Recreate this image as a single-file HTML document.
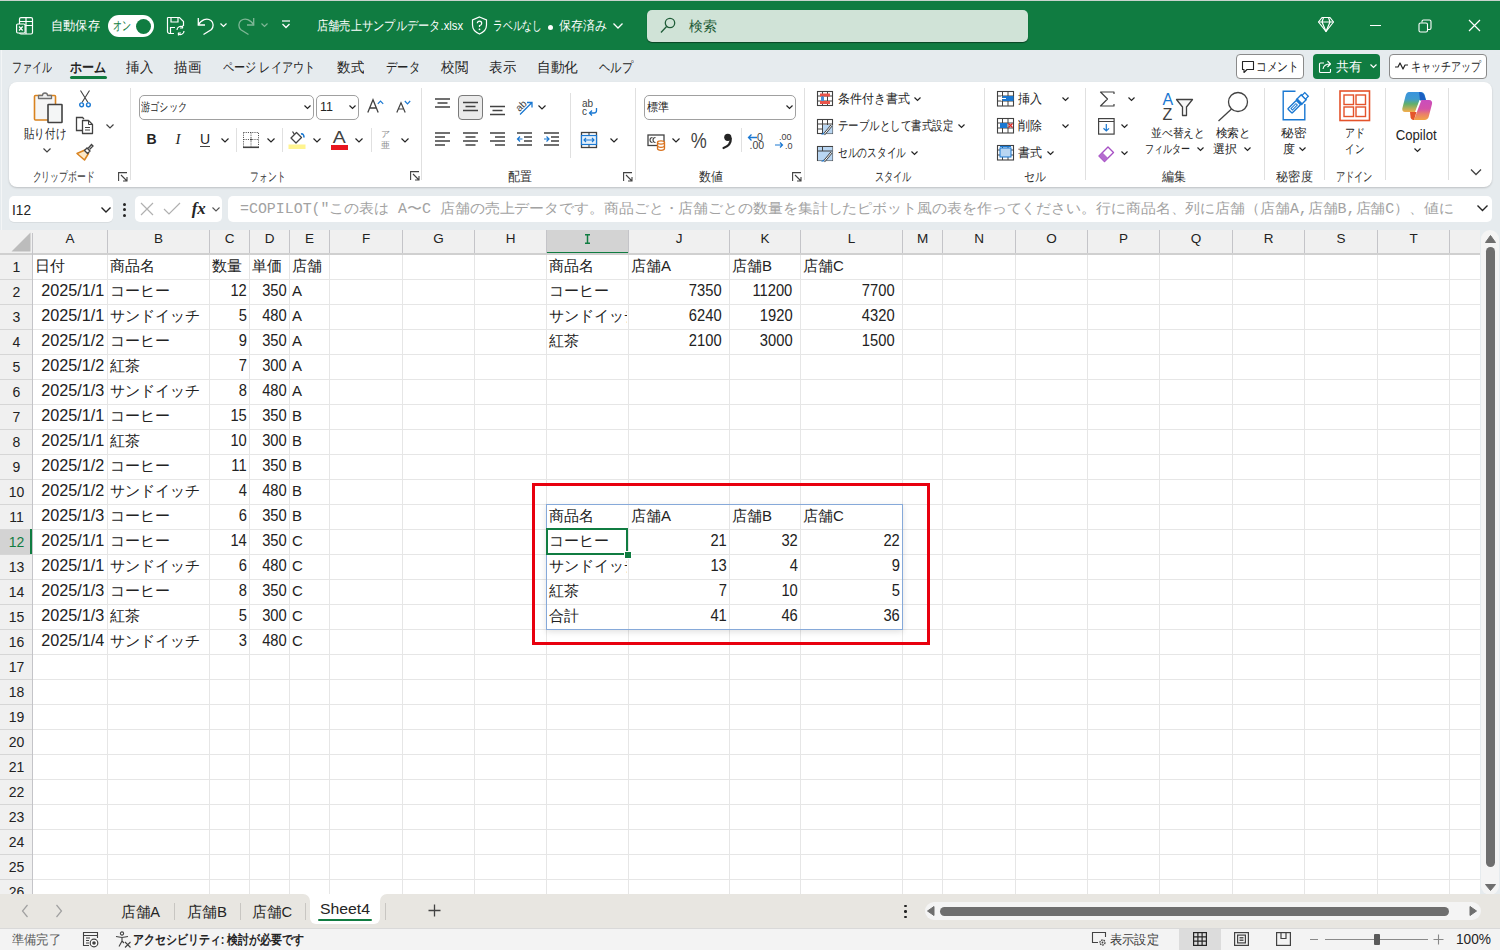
<!DOCTYPE html><html><head><meta charset="utf-8"><style>
html,body{margin:0;padding:0}
body{width:1500px;height:950px;position:relative;overflow:hidden;font-family:"Liberation Sans",sans-serif;background:#e6ebee}
</style></head><body>
<div style="position:absolute;left:0px;top:0px;width:1500px;height:50px;background:#107c41"></div>
<div style="position:absolute;left:0px;top:0px;width:1500px;height:1px;background:#c9d3cd"></div>
<svg style="position:absolute;left:16px;top:17px;overflow:visible;" width="18" height="18" viewBox="0 0 18 18"><g fill="none" stroke="#fff" stroke-width="1.2"><rect x="3.5" y="0.6" width="13" height="16.4" rx="1.5"/><path d="M3.5 4.5H16.5M3.5 8.5H16.5M10 0.6V17"/></g><rect x="0.6" y="7" width="8.5" height="9" rx="1.2" fill="#107c41" stroke="#fff" stroke-width="1.2"/><path d="M3 9.5L6.7 13.5M6.7 9.5L3 13.5" stroke="#fff" stroke-width="1.2"/></svg>
<div id="kc80b38d469" style="position:absolute;left:51px;top:17.0px;font-size:13px;line-height:18px;color:#ffffff;white-space:nowrap;transform:scaleX(0.9423);transform-origin:left center;">自動保存</div>
<div style="position:absolute;left:107.5px;top:15px;width:46px;height:21.5px;background:#fff;border-radius:11px"></div>
<div id="k513fdbb71a" style="position:absolute;left:113px;top:17.5px;font-size:12.5px;line-height:17px;color:#107c41;white-space:nowrap;transform:scaleX(0.6923);transform-origin:left center;">オン</div>
<div style="position:absolute;left:136px;top:18.5px;width:15px;height:15px;background:#107c41;border-radius:50%"></div>
<svg style="position:absolute;left:166px;top:16px;overflow:visible;" width="20" height="20" viewBox="0 0 20 20"><g fill="none" stroke="#fff" stroke-width="1.2"><path d="M1.5 1.5H13.5L17.5 5.5V10M8 17.5H3.5A2 2 0 0 1 1.5 15.5V1.5"/><path d="M5 1.5V6H12V1.5M4.5 17.5V11.5H9"/><path d="M11 14a3.5 3.5 0 0 1 6-2.5M18 15a3.5 3.5 0 0 1-6 2.5"/><path d="M16.5 9.5V12H14M12.5 19.5V17H15"/></g></svg>
<svg style="position:absolute;left:196px;top:16px;overflow:visible;" width="20" height="20" viewBox="0 0 20 20"><g fill="none" stroke="#fff" stroke-width="1.3"><path d="M2.3 9C5 3.5 11 1.5 15 4.5C18 7 17.5 11 15.5 13.5L7.5 18.5"/><path d="M2.3 2V9H9"/></g></svg>
<svg style="position:absolute;left:219.5px;top:22.75px;overflow:visible;" width="7" height="4.5" viewBox="0 0 7 4.5"><path d="M0.5 0.5L3.5 3.5L6.5 0.5" fill="none" stroke="#fff" stroke-width="1.2"/></svg>
<svg style="position:absolute;left:236px;top:16px;overflow:visible;" width="20" height="20" viewBox="0 0 20 20"><g fill="none" stroke="#7fb796" stroke-width="1.3"><path d="M17.7 9C15 3.5 9 1.5 5 4.5C2 7 2.5 11 4.5 13.5L12.5 18.5"/><path d="M17.7 2V9H11"/></g></svg>
<svg style="position:absolute;left:260.5px;top:22.75px;overflow:visible;" width="7" height="4.5" viewBox="0 0 7 4.5"><path d="M0.5 0.5L3.5 3.5L6.5 0.5" fill="none" stroke="#7fb796" stroke-width="1.2"/></svg>
<svg style="position:absolute;left:281px;top:20px;overflow:visible;" width="10" height="9" viewBox="0 0 10 9"><path d="M1 1H9" stroke="#fff" stroke-width="1.2"/><path d="M1.5 4L5 7.5L8.5 4" fill="none" stroke="#fff" stroke-width="1.3"/></svg>
<div id="kfa239ee029" style="position:absolute;left:317px;top:17.0px;font-size:13px;line-height:18px;color:#ffffff;white-space:nowrap;transform:scaleX(0.8639);transform-origin:left center;">店舗売上サンプルデータ.xlsx</div>
<svg style="position:absolute;left:471px;top:16px;overflow:visible;" width="17" height="19" viewBox="0 0 17 19"><g fill="none" stroke="#fff" stroke-width="1.2"><path d="M8.5 1L15.5 4V9C15.5 13.5 12 16.5 8.5 18C5 16.5 1.5 13.5 1.5 9V4Z"/><path d="M6.3 7.3A2.2 2.2 0 1 1 8.5 9.5V11"/></g><circle cx="8.5" cy="13.3" r="0.9" fill="#fff"/></svg>
<div id="k0396da8b92" style="position:absolute;left:493px;top:17.0px;font-size:13px;line-height:18px;color:#ffffff;white-space:nowrap;transform:scaleX(0.7538);transform-origin:left center;">ラベルなし</div>
<div style="position:absolute;left:548px;top:25px;width:5px;height:5px;background:#fff;border-radius:50%"></div>
<div id="k98cbf28133" style="position:absolute;left:559px;top:17.0px;font-size:13px;line-height:18px;color:#ffffff;white-space:nowrap;transform:scaleX(0.9231);transform-origin:left center;">保存済み</div>
<svg style="position:absolute;left:612.5px;top:23.0px;overflow:visible;" width="10" height="6.0" viewBox="0 0 10 6.0"><path d="M0.5 0.5L5.0 5.0L9.5 0.5" fill="none" stroke="#fff" stroke-width="1.3"/></svg>
<div style="position:absolute;left:647px;top:9.5px;width:381px;height:32px;background:#d0e3d7;border-radius:5px;box-shadow:0 1px 1px rgba(0,0,0,0.45)"></div>
<svg style="position:absolute;left:660px;top:17px;overflow:visible;" width="16" height="17" viewBox="0 0 16 17"><g fill="none" stroke="#1f5c38" stroke-width="1.3"><circle cx="10" cy="6" r="4.7"/><path d="M6.6 9.5L1 15.5"/></g></svg>
<div id="kc82e15abd0" style="position:absolute;left:689px;top:16.5px;font-size:14px;line-height:19px;color:#1f5c38;white-space:nowrap;transform:scaleX(1.0000);transform-origin:left center;">検索</div>
<svg style="position:absolute;left:1317px;top:16px;overflow:visible;" width="18" height="17" viewBox="0 0 18 17"><g fill="none" stroke="#fff" stroke-width="1.2" stroke-linejoin="round"><path d="M5 1.5H13L16.5 6L9 15.5L1.5 6Z"/><path d="M1.5 6H16.5M6.5 1.5L5 6L9 15.5L13 6L11.5 1.5"/></g></svg>
<div style="position:absolute;left:1370px;top:25px;width:11px;height:1.3px;background:#fff"></div>
<svg style="position:absolute;left:1418px;top:19px;overflow:visible;" width="14" height="14" viewBox="0 0 14 14"><g fill="none" stroke="#fff" stroke-width="1.1"><rect x="1" y="4" width="8.5" height="9" rx="1.5"/><path d="M4 3.5V2.5A1.5 1.5 0 0 1 5.5 1H11.5A1.5 1.5 0 0 1 13 2.5V9A1.5 1.5 0 0 1 11.5 10.5H10"/></g></svg>
<svg style="position:absolute;left:1468px;top:19px;overflow:visible;" width="13" height="13" viewBox="0 0 13 13"><path d="M1 1L12 12M12 1L1 12" stroke="#fff" stroke-width="1.2"/></svg>
<div style="position:absolute;left:0px;top:50px;width:1500px;height:843px;background:#e6ebee"></div>
<div style="position:absolute;left:1px;top:50px;width:1px;height:180px;background:#f3f5f6"></div>
<div id="kdeceec6de7" style="position:absolute;left:12px;top:57.5px;font-size:14px;line-height:19px;color:#242424;white-space:nowrap;transform:scaleX(0.7143);transform-origin:left center;">ファイル</div>
<div id="k7e3082d08b" style="position:absolute;left:70px;top:57.5px;font-size:14px;line-height:19px;color:#242424;white-space:nowrap;transform:scaleX(0.8571);transform-origin:left center;font-weight:bold">ホーム</div>
<div id="k71ca8e1be8" style="position:absolute;left:126px;top:57.5px;font-size:14px;line-height:19px;color:#242424;white-space:nowrap;transform:scaleX(0.9643);transform-origin:left center;">挿入</div>
<div id="k2697a59992" style="position:absolute;left:174px;top:57.5px;font-size:14px;line-height:19px;color:#242424;white-space:nowrap;transform:scaleX(0.9643);transform-origin:left center;">描画</div>
<div id="k6b0234109a" style="position:absolute;left:223px;top:57.5px;font-size:14px;line-height:19px;color:#242424;white-space:nowrap;transform:scaleX(0.7939);transform-origin:left center;">ページ レイアウト</div>
<div id="ka654211fda" style="position:absolute;left:337px;top:57.5px;font-size:14px;line-height:19px;color:#242424;white-space:nowrap;transform:scaleX(0.9643);transform-origin:left center;">数式</div>
<div id="k51a8e1831c" style="position:absolute;left:386px;top:57.5px;font-size:14px;line-height:19px;color:#242424;white-space:nowrap;transform:scaleX(0.8095);transform-origin:left center;">データ</div>
<div id="kfc10c9004e" style="position:absolute;left:441px;top:57.5px;font-size:14px;line-height:19px;color:#242424;white-space:nowrap;transform:scaleX(0.9643);transform-origin:left center;">校閲</div>
<div id="kf959d6e3b8" style="position:absolute;left:489px;top:57.5px;font-size:14px;line-height:19px;color:#242424;white-space:nowrap;transform:scaleX(0.9643);transform-origin:left center;">表示</div>
<div id="ka636eb5376" style="position:absolute;left:537px;top:57.5px;font-size:14px;line-height:19px;color:#242424;white-space:nowrap;transform:scaleX(0.9762);transform-origin:left center;">自動化</div>
<div id="kbe3d7886c9" style="position:absolute;left:599px;top:57.5px;font-size:14px;line-height:19px;color:#242424;white-space:nowrap;transform:scaleX(0.8095);transform-origin:left center;">ヘルプ</div>
<div style="position:absolute;left:70px;top:76px;width:37px;height:3px;background:#107c41;border-radius:2px"></div>
<div style="position:absolute;left:1236px;top:54px;width:68px;height:25px;background:#fff;border:1px solid #8a8a8a;border-radius:4px;box-sizing:border-box"></div>
<svg style="position:absolute;left:1241px;top:60px;overflow:visible;" width="14" height="14" viewBox="0 0 14 14"><path d="M1.5 1.5H12.5V9.5H6L3 12.5V9.5H1.5Z" fill="none" stroke="#242424" stroke-width="1.1" stroke-linejoin="round"/></svg>
<div id="k367a9ea3e5" style="position:absolute;left:1256px;top:57.5px;font-size:13px;line-height:18px;color:#242424;white-space:nowrap;transform:scaleX(0.8269);transform-origin:left center;">コメント</div>
<div style="position:absolute;left:1313px;top:54px;width:67px;height:25px;background:#107c41;border-radius:4px"></div>
<svg style="position:absolute;left:1318px;top:59px;overflow:visible;" width="15" height="15" viewBox="0 0 15 15"><g fill="none" stroke="#fff" stroke-width="1.1"><path d="M6 4H2.5A1 1 0 0 0 1.5 5V12.5A1 1 0 0 0 2.5 13.5H11.5A1 1 0 0 0 12.5 12.5V10"/><path d="M5 10C5.5 7 8 5 12 5M9.5 2L12.5 5L9.5 8" stroke-linejoin="round"/></g></svg>
<div id="k86da04f211" style="position:absolute;left:1336px;top:57.5px;font-size:13px;line-height:18px;color:#fff;white-space:nowrap;transform:scaleX(1.0000);transform-origin:left center;">共有</div>
<svg style="position:absolute;left:1369.5px;top:64.25px;overflow:visible;" width="7" height="4.5" viewBox="0 0 7 4.5"><path d="M0.5 0.5L3.5 3.5L6.5 0.5" fill="none" stroke="#fff" stroke-width="1.2"/></svg>
<div style="position:absolute;left:1389px;top:54px;width:98px;height:25px;background:#fff;border:1px solid #8a8a8a;border-radius:4px;box-sizing:border-box"></div>
<svg style="position:absolute;left:1394px;top:61px;overflow:visible;" width="15" height="10" viewBox="0 0 15 10"><path d="M1 6H4L6 2L9 8L11 4H14" fill="none" stroke="#242424" stroke-width="1.2" stroke-linejoin="round"/></svg>
<div id="kaecc8b98e7" style="position:absolute;left:1411px;top:57.5px;font-size:13px;line-height:18px;color:#242424;white-space:nowrap;transform:scaleX(0.7692);transform-origin:left center;">キャッチアップ</div>
<div style="position:absolute;left:9px;top:82px;width:1483px;height:105px;background:#fff;border-radius:8px;box-shadow:0 1px 2px rgba(0,0,0,0.18)"></div>
<svg style="position:absolute;left:33px;top:90px;overflow:visible;" width="31" height="34" viewBox="0 0 31 34"><rect x="1.5" y="5.5" width="21" height="24.5" rx="1" fill="#f6f6f6" stroke="#d9831f" stroke-width="1.6"/><path d="M5.5 8.5V5.5H9.5A2.5 2.5 0 0 1 14.5 5.5H18.5V8.5Z" fill="#f0f0f0" stroke="#707070" stroke-width="1.3" stroke-linejoin="round"/><rect x="15" y="14.5" width="14" height="18" rx="0.5" fill="#f4f6f6" stroke="#424242" stroke-width="1.6"/></svg>
<div style="position:absolute;left:-255px;width:600px;text-align:center;top:125.0px;font-size:13px;line-height:18px;color:#242424;white-space:nowrap;"><span id="k82a7d492c0" style="display:inline-block;transform:scaleX(0.8077);transform-origin:center center;">貼り付け</span></div>
<svg style="position:absolute;left:43.0px;top:147.5px;overflow:visible;" width="8" height="5.0" viewBox="0 0 8 5.0"><path d="M0.5 0.5L4.0 4.0L7.5 0.5" fill="none" stroke="#424242" stroke-width="1.2"/></svg>
<svg style="position:absolute;left:78px;top:90px;overflow:visible;" width="14" height="18" viewBox="0 0 14 18"><path d="M2.5 0.5L10 12.5M11.5 0.5L4 12.5" stroke="#424242" stroke-width="1.1" fill="none"/><circle cx="3.6" cy="14.8" r="1.9" fill="none" stroke="#1a78d2" stroke-width="1.4"/><circle cx="10.4" cy="14.8" r="1.9" fill="none" stroke="#1a78d2" stroke-width="1.4"/></svg>
<svg style="position:absolute;left:75px;top:116px;overflow:visible;" width="19" height="19" viewBox="0 0 19 19"><path d="M8.5 14.5H1.5V1.5H7.5L9 3" fill="none" stroke="#424242" stroke-width="1.3"/><path d="M7.5 4.5H13.5L17.5 8.5V17.5H7.5Z" fill="#fff" stroke="#424242" stroke-width="1.3" stroke-linejoin="round"/><path d="M13.5 4.5V8.5H17.5M10 11.5H15M10 14H15" fill="none" stroke="#424242" stroke-width="1"/></svg>
<svg style="position:absolute;left:105.5px;top:123.5px;overflow:visible;" width="8" height="5.0" viewBox="0 0 8 5.0"><path d="M0.5 0.5L4.0 4.0L7.5 0.5" fill="none" stroke="#424242" stroke-width="1.2"/></svg>
<svg style="position:absolute;left:76px;top:143px;overflow:visible;" width="18" height="18" viewBox="0 0 18 18"><path d="M1 10.5L9 7L12.5 10.5L8.5 17Z" fill="#fde9c8" stroke="#d9831f" stroke-width="1.5" stroke-linejoin="round"/><path d="M8.5 7.5L11 5L14 8L11.5 10.5Z" fill="#fff" stroke="#424242" stroke-width="1.3"/><path d="M12 5.5L15.5 1.5L17 3L13.5 6.5" fill="#fff" stroke="#424242" stroke-width="1.3"/></svg>
<div style="position:absolute;left:-237px;width:600px;text-align:center;top:167.5px;font-size:13px;line-height:18px;color:#333333;white-space:nowrap;"><span id="k5d3b5927a9" style="display:inline-block;transform:scaleX(0.6813);transform-origin:center center;">クリップボード</span></div>
<svg style="position:absolute;left:118px;top:172px;overflow:visible;" width="10" height="10" viewBox="0 0 10 10"><g fill="none" stroke="#424242" stroke-width="1.1"><path d="M0.6 9V0.6H9"/><path d="M3 3L9 9M9 5V9H5"/></g></svg>
<div style="position:absolute;left:130px;top:88px;width:1px;height:92px;background:#e0e0e0"></div>
<div style="position:absolute;left:139px;top:94.5px;width:175px;height:25px;border:1.3px solid #a0a0a0;border-radius:5px;box-sizing:border-box"></div>
<div id="k4c1d2b1613" style="position:absolute;left:141px;top:98.5px;font-size:12px;line-height:16px;color:#242424;white-space:nowrap;transform:scaleX(0.7667);transform-origin:left center;">游ゴシック</div>
<svg style="position:absolute;left:304.0px;top:105.25px;overflow:visible;" width="7" height="4.5" viewBox="0 0 7 4.5"><path d="M0.5 0.5L3.5 3.5L6.5 0.5" fill="none" stroke="#242424" stroke-width="1.2"/></svg>
<div style="position:absolute;left:316px;top:94.5px;width:43px;height:25px;border:1.3px solid #a0a0a0;border-radius:5px;box-sizing:border-box"></div>
<div id="k6cc648e513" style="position:absolute;left:320px;top:97.5px;font-size:13px;line-height:18px;color:#242424;white-space:nowrap;transform:scaleX(0.9630);transform-origin:left center;">11</div>
<svg style="position:absolute;left:349.0px;top:105.25px;overflow:visible;" width="7" height="4.5" viewBox="0 0 7 4.5"><path d="M0.5 0.5L3.5 3.5L6.5 0.5" fill="none" stroke="#242424" stroke-width="1.2"/></svg>
<svg style="position:absolute;left:367px;top:98.5px;overflow:visible;" width="12" height="14" viewBox="0 0 12 14"><path d="M0.8 13.5L6 0.8L11.2 13.5M2.8 9H9.2" fill="none" stroke="#424242" stroke-width="1.3"/></svg>
<svg style="position:absolute;left:377px;top:99.5px;overflow:visible;" width="7" height="5" viewBox="0 0 7 5"><path d="M0.8 3.8L3.5 1L6.2 3.8" fill="none" stroke="#1a78d2" stroke-width="1.2"/></svg>
<svg style="position:absolute;left:396px;top:102px;overflow:visible;" width="10" height="11" viewBox="0 0 10 11"><path d="M0.8 10.5L5 0.8L9.2 10.5M2.4 7H7.6" fill="none" stroke="#424242" stroke-width="1.2"/></svg>
<svg style="position:absolute;left:403.5px;top:99.5px;overflow:visible;" width="7" height="5" viewBox="0 0 7 5"><path d="M0.8 1L3.5 3.8L6.2 1" fill="none" stroke="#1a78d2" stroke-width="1.2"/></svg>
<div style="position:absolute;left:-148.5px;width:600px;text-align:center;top:130.0px;font-size:14px;line-height:19px;color:#242424;white-space:nowrap;font-weight:bold"><span>B</span></div>
<div style="position:absolute;left:-122px;width:600px;text-align:center;top:129.0px;font-size:15px;line-height:21px;color:#242424;white-space:nowrap;font-family:'Liberation Serif',serif;font-style:italic"><span>I</span></div>
<div style="position:absolute;left:-95px;width:600px;text-align:center;top:129.5px;font-size:14px;line-height:19px;color:#242424;white-space:nowrap;"><span>U</span></div>
<div style="position:absolute;left:200px;top:145.5px;width:10px;height:1.3px;background:#424242"></div>
<svg style="position:absolute;left:221.0px;top:137.5px;overflow:visible;" width="8" height="5.0" viewBox="0 0 8 5.0"><path d="M0.5 0.5L4.0 4.0L7.5 0.5" fill="none" stroke="#242424" stroke-width="1.2"/></svg>
<div style="position:absolute;left:236px;top:128px;width:1px;height:24px;background:#e0e0e0"></div>
<svg style="position:absolute;left:242px;top:131px;overflow:visible;" width="18" height="18" viewBox="0 0 18 18"><g fill="none" stroke="#424242" stroke-width="1" stroke-dasharray="1 1.2"><path d="M1.5 1.5H16.5V15.5M1.5 1.5V15.5M1.5 8.5H16.5M9 1.5V15.5"/></g><path d="M1 16.3H17" stroke="#424242" stroke-width="1.6"/><circle cx="9" cy="8.5" r="1" fill="#424242"/></svg>
<svg style="position:absolute;left:267.0px;top:137.5px;overflow:visible;" width="8" height="5.0" viewBox="0 0 8 5.0"><path d="M0.5 0.5L4.0 4.0L7.5 0.5" fill="none" stroke="#242424" stroke-width="1.2"/></svg>
<div style="position:absolute;left:282px;top:128px;width:1px;height:24px;background:#e0e0e0"></div>
<svg style="position:absolute;left:288px;top:130px;overflow:visible;" width="19" height="20" viewBox="0 0 19 20"><path d="M3 8L8.5 2.5L13.5 7.5L8 13Z" fill="#fff" stroke="#424242" stroke-width="1.3" stroke-linejoin="round"/><path d="M6.5 4.5L4.5 1.5" stroke="#424242" stroke-width="1.3"/><path d="M13 4C15 3.5 16 5 16 7.5" fill="none" stroke="#1a78d2" stroke-width="1.6"/><rect x="0.5" y="14.5" width="17" height="4.5" fill="#fff48f"/></svg>
<svg style="position:absolute;left:313.0px;top:137.5px;overflow:visible;" width="8" height="5.0" viewBox="0 0 8 5.0"><path d="M0.5 0.5L4.0 4.0L7.5 0.5" fill="none" stroke="#242424" stroke-width="1.2"/></svg>
<div style="position:absolute;left:39.5px;width:600px;text-align:center;top:126.5px;font-size:16px;line-height:22px;color:#424242;white-space:nowrap;"><span id="k9cfecd8ff2" style="display:inline-block;transform:scaleX(1.2182);transform-origin:center center;">A</span></div>
<div style="position:absolute;left:331px;top:145px;width:17px;height:4.5px;background:#e8161f"></div>
<svg style="position:absolute;left:355.0px;top:137.5px;overflow:visible;" width="8" height="5.0" viewBox="0 0 8 5.0"><path d="M0.5 0.5L4.0 4.0L7.5 0.5" fill="none" stroke="#242424" stroke-width="1.2"/></svg>
<div style="position:absolute;left:370.5px;top:128px;width:1px;height:24px;background:#e0e0e0"></div>
<div style="position:absolute;left:85px;width:600px;text-align:center;top:129.0px;font-size:8.5px;line-height:11px;color:#8a8a8a;white-space:nowrap;"><span>ア</span></div>
<div style="position:absolute;left:85px;width:600px;text-align:center;top:138.5px;font-size:9px;line-height:12px;color:#8a8a8a;white-space:nowrap;"><span>亜</span></div>
<svg style="position:absolute;left:401.0px;top:137.5px;overflow:visible;" width="8" height="5.0" viewBox="0 0 8 5.0"><path d="M0.5 0.5L4.0 4.0L7.5 0.5" fill="none" stroke="#242424" stroke-width="1.2"/></svg>
<div style="position:absolute;left:-32px;width:600px;text-align:center;top:167.5px;font-size:13px;line-height:18px;color:#333333;white-space:nowrap;"><span id="kd9a583a714" style="display:inline-block;transform:scaleX(0.6731);transform-origin:center center;">フォント</span></div>
<svg style="position:absolute;left:410px;top:171px;overflow:visible;" width="10" height="10" viewBox="0 0 10 10"><g fill="none" stroke="#424242" stroke-width="1.1"><path d="M0.6 9V0.6H9"/><path d="M3 3L9 9M9 5V9H5"/></g></svg>
<div style="position:absolute;left:421px;top:88px;width:1px;height:92px;background:#e0e0e0"></div>
<svg style="position:absolute;left:434px;top:96px;overflow:visible;" width="18" height="18" viewBox="0 0 18 18"><path d="M1 3H16M3.5 7H13.5M1 11H16" fill="none" stroke="#424242" stroke-width="1.3"/></svg>
<div style="position:absolute;left:458px;top:94.5px;width:24.5px;height:25px;background:#ebebeb;border:1px solid #7a7a7a;border-radius:4px;box-sizing:border-box"></div>
<svg style="position:absolute;left:461.5px;top:98px;overflow:visible;" width="18" height="18" viewBox="0 0 18 18"><path d="M1 4.5H16M3.5 8.5H13.5M1 12.5H16" fill="none" stroke="#424242" stroke-width="1.3"/></svg>
<svg style="position:absolute;left:489px;top:98px;overflow:visible;" width="18" height="18" viewBox="0 0 18 18"><path d="M1 8.5H16M3.5 12.5H13.5M1 16.5H16" fill="none" stroke="#424242" stroke-width="1.3"/></svg>
<svg style="position:absolute;left:515px;top:97px;overflow:visible;" width="20" height="19" viewBox="0 0 20 19"><text x="0" y="12" font-size="10" fill="#424242" transform="rotate(-45 6 8)" font-family="Liberation Sans">ab</text><path d="M5 17.5L17 5.5M12 5.5H17V10.5" fill="none" stroke="#1a78d2" stroke-width="1.3"/></svg>
<svg style="position:absolute;left:538.0px;top:104.5px;overflow:visible;" width="8" height="5.0" viewBox="0 0 8 5.0"><path d="M0.5 0.5L4.0 4.0L7.5 0.5" fill="none" stroke="#242424" stroke-width="1.2"/></svg>
<div style="position:absolute;left:570px;top:93px;width:1px;height:65px;background:#e0e0e0"></div>
<svg style="position:absolute;left:582px;top:98px;overflow:visible;" width="18" height="19" viewBox="0 0 18 19"><text x="0" y="8.5" font-size="10" fill="#424242" font-family="Liberation Sans">ab</text><text x="0" y="17" font-size="10" fill="#424242" font-family="Liberation Sans">c</text><path d="M14.5 10V12.5A2.5 2.5 0 0 1 12 15H7.5M10 12.5L7.5 15L10 17.5" fill="none" stroke="#1a78d2" stroke-width="1.3"/></svg>
<svg style="position:absolute;left:434px;top:131px;overflow:visible;" width="18" height="18" viewBox="0 0 18 18"><path d="M1 2H16M1 6H11M1 10H16M1 14H11" fill="none" stroke="#424242" stroke-width="1.3"/></svg>
<svg style="position:absolute;left:461.5px;top:131px;overflow:visible;" width="18" height="18" viewBox="0 0 18 18"><path d="M1 2H16M3.5 6H13.5M1 10H16M3.5 14H13.5" fill="none" stroke="#424242" stroke-width="1.3"/></svg>
<svg style="position:absolute;left:488.5px;top:131px;overflow:visible;" width="18" height="18" viewBox="0 0 18 18"><path d="M1 2H16M6 6H16M1 10H16M6 14H16" fill="none" stroke="#424242" stroke-width="1.3"/></svg>
<svg style="position:absolute;left:516px;top:131px;overflow:visible;" width="18" height="18" viewBox="0 0 18 18"><path d="M1 2H16M8 6H16M8 10H16M1 14H16" fill="none" stroke="#424242" stroke-width="1.3"/><path d="M6.5 8H1.5M4 5.5L1.5 8L4 10.5" fill="none" stroke="#1a78d2" stroke-width="1.2"/></svg>
<svg style="position:absolute;left:543px;top:131px;overflow:visible;" width="18" height="18" viewBox="0 0 18 18"><path d="M1 2H16M8 6H16M8 10H16M1 14H16" fill="none" stroke="#424242" stroke-width="1.3"/><path d="M1 8H6M3.5 5.5L6 8L3.5 10.5" fill="none" stroke="#1a78d2" stroke-width="1.2"/></svg>
<svg style="position:absolute;left:580px;top:131px;overflow:visible;" width="18" height="18" viewBox="0 0 18 18"><rect x="1.5" y="1.5" width="15" height="15" fill="none" stroke="#424242" stroke-width="1.3"/><path d="M9 1.5V4M9 14V16.5" stroke="#424242" stroke-width="1.1"/><rect x="1.5" y="4.5" width="15" height="9" fill="#e3effa" stroke="#1a78d2" stroke-width="1.2"/><path d="M4 9H14M6 7L4 9L6 11M12 7L14 9L12 11" fill="none" stroke="#1a78d2" stroke-width="1.1"/></svg>
<svg style="position:absolute;left:610.0px;top:137.5px;overflow:visible;" width="8" height="5.0" viewBox="0 0 8 5.0"><path d="M0.5 0.5L4.0 4.0L7.5 0.5" fill="none" stroke="#242424" stroke-width="1.2"/></svg>
<div style="position:absolute;left:220px;width:600px;text-align:center;top:167.5px;font-size:13px;line-height:18px;color:#333333;white-space:nowrap;"><span id="k296ab472af" style="display:inline-block;transform:scaleX(0.9231);transform-origin:center center;">配置</span></div>
<svg style="position:absolute;left:623px;top:172px;overflow:visible;" width="10" height="10" viewBox="0 0 10 10"><g fill="none" stroke="#424242" stroke-width="1.1"><path d="M0.6 9V0.6H9"/><path d="M3 3L9 9M9 5V9H5"/></g></svg>
<div style="position:absolute;left:634.5px;top:88px;width:1px;height:92px;background:#e0e0e0"></div>
<div style="position:absolute;left:644px;top:94.5px;width:152px;height:25px;border:1.3px solid #a0a0a0;border-radius:5px;box-sizing:border-box"></div>
<div id="k7ceeda4005" style="position:absolute;left:647px;top:98.5px;font-size:12px;line-height:16px;color:#242424;white-space:nowrap;transform:scaleX(0.9167);transform-origin:left center;">標準</div>
<svg style="position:absolute;left:785.5px;top:105.25px;overflow:visible;" width="7" height="4.5" viewBox="0 0 7 4.5"><path d="M0.5 0.5L3.5 3.5L6.5 0.5" fill="none" stroke="#242424" stroke-width="1.2"/></svg>
<svg style="position:absolute;left:647px;top:134px;overflow:visible;" width="20" height="17" viewBox="0 0 20 17"><rect x="1" y="1" width="16" height="10.5" fill="#fff" stroke="#424242" stroke-width="1.3"/><path d="M5.5 3.5A2.3 2.3 0 0 0 5.5 8.5M8.5 3.5A2.3 2.3 0 0 0 8.5 8.5" fill="none" stroke="#424242" stroke-width="1.1"/><path d="M10.5 8.5V14.5C10.5 15.6 12 16.3 14 16.3S17.5 15.6 17.5 14.5V8.5" fill="#fff" stroke="#d9731f" stroke-width="1.3"/><ellipse cx="14" cy="8.5" rx="3.5" ry="1.6" fill="#fff" stroke="#d9731f" stroke-width="1.3"/><path d="M10.5 11.5C10.5 12.6 12 13.3 14 13.3S17.5 12.6 17.5 11.5" fill="none" stroke="#d9731f" stroke-width="1.2"/></svg>
<svg style="position:absolute;left:672.0px;top:137.5px;overflow:visible;" width="8" height="5.0" viewBox="0 0 8 5.0"><path d="M0.5 0.5L4.0 4.0L7.5 0.5" fill="none" stroke="#242424" stroke-width="1.2"/></svg>
<div style="position:absolute;left:399px;width:600px;text-align:center;top:125.5px;font-size:22px;line-height:30px;color:#424242;white-space:nowrap;"><span id="k308ecc40e2" style="display:inline-block;transform:scaleX(0.8179);transform-origin:center center;">%</span></div>
<svg style="position:absolute;left:721px;top:133px;overflow:visible;" width="12" height="16" viewBox="0 0 12 16"><circle cx="6.8" cy="4.3" r="3.6" fill="#242424"/><path d="M9.8 5.5C10 10 7 13.5 2.5 15" fill="none" stroke="#242424" stroke-width="2.2" stroke-linecap="round"/></svg>
<div style="position:absolute;left:741px;top:128px;width:1px;height:24px;background:#e0e0e0"></div>
<svg style="position:absolute;left:747px;top:132px;overflow:visible;" width="19" height="18" viewBox="0 0 19 18"><text x="10" y="9" font-size="10.5" fill="#424242" font-family="Liberation Sans">0</text><text x="2.5" y="17" font-size="10.5" fill="#424242" font-family="Liberation Sans">.00</text><path d="M10 5.5H1.5M4.5 2.5L1.5 5.5L4.5 8.5" fill="none" stroke="#1a78d2" stroke-width="1.3"/></svg>
<svg style="position:absolute;left:774px;top:132px;overflow:visible;" width="19" height="18" viewBox="0 0 19 18"><text x="5" y="8" font-size="9" fill="#424242" font-family="Liberation Sans">.00</text><text x="11" y="16.5" font-size="9" fill="#424242" font-family="Liberation Sans">.0</text><path d="M1 13H8.5M6 10.5L8.5 13L6 15.5" fill="none" stroke="#1a78d2" stroke-width="1.2"/></svg>
<div style="position:absolute;left:411px;width:600px;text-align:center;top:167.5px;font-size:13px;line-height:18px;color:#333333;white-space:nowrap;"><span id="kc6b7fdaf2d" style="display:inline-block;transform:scaleX(0.9231);transform-origin:center center;">数値</span></div>
<svg style="position:absolute;left:792px;top:172px;overflow:visible;" width="10" height="10" viewBox="0 0 10 10"><g fill="none" stroke="#424242" stroke-width="1.1"><path d="M0.6 9V0.6H9"/><path d="M3 3L9 9M9 5V9H5"/></g></svg>
<div style="position:absolute;left:804px;top:88px;width:1px;height:92px;background:#e0e0e0"></div>
<svg style="position:absolute;left:817px;top:91px;overflow:visible;" width="17" height="17" viewBox="0 0 17 17"><rect x="0.5" y="0.5" width="15" height="14" fill="#fff" stroke="#424242" stroke-width="1.1"/><path d="M0.5 5H15.5M0.5 10H15.5M5.5 0.5V14.5M10.5 0.5V14.5" stroke="#424242" stroke-width="1"/><rect x="3" y="2.5" width="10" height="3" fill="#e8544a"/><rect x="3" y="10" width="10" height="3" fill="#e8544a"/><rect x="4" y="5.5" width="3" height="4.5" fill="#4a90d9"/></svg>
<div id="k7cddb756c4" style="position:absolute;left:838px;top:90.0px;font-size:13px;line-height:18px;color:#242424;white-space:nowrap;transform:scaleX(0.9231);transform-origin:left center;">条件付き書式</div>
<svg style="position:absolute;left:913.5px;top:97.25px;overflow:visible;" width="7" height="4.5" viewBox="0 0 7 4.5"><path d="M0.5 0.5L3.5 3.5L6.5 0.5" fill="none" stroke="#242424" stroke-width="1.2"/></svg>
<svg style="position:absolute;left:817px;top:118.5px;overflow:visible;" width="17" height="17" viewBox="0 0 17 17"><rect x="0.5" y="0.5" width="15" height="14" fill="#fff" stroke="#424242" stroke-width="1.1"/><path d="M0.5 5H15.5M0.5 10H15.5M5.5 0.5V14.5M10.5 0.5V14.5" stroke="#424242" stroke-width="1"/><path d="M6 6V14.5H15.5V6Z" fill="#b9d6f2"/><path d="M7 15.5L14.5 6.5" stroke="#424242" stroke-width="2.4"/><path d="M7 15.5L14.5 6.5" stroke="#fff" stroke-width="1"/><path d="M4 16L6.5 13.5L7.5 15Z" fill="#1a78d2"/></svg>
<div id="keabd58c029" style="position:absolute;left:838px;top:117.0px;font-size:13px;line-height:18px;color:#242424;white-space:nowrap;transform:scaleX(0.8042);transform-origin:left center;">テーブルとして書式設定</div>
<svg style="position:absolute;left:957.5px;top:124.25px;overflow:visible;" width="7" height="4.5" viewBox="0 0 7 4.5"><path d="M0.5 0.5L3.5 3.5L6.5 0.5" fill="none" stroke="#242424" stroke-width="1.2"/></svg>
<svg style="position:absolute;left:817px;top:145.5px;overflow:visible;" width="17" height="17" viewBox="0 0 17 17"><rect x="0.5" y="0.5" width="15" height="14" fill="#fff" stroke="#424242" stroke-width="1.1"/><path d="M0.5 5H15.5M0.5 10H15.5M5.5 0.5V14.5M10.5 0.5V14.5" stroke="#424242" stroke-width="1"/><path d="M1 1V14.5H15.5V1Z" fill="#b9d6f2"/><path d="M0.5 5H15.5M5.5 0.5V5" stroke="#424242" stroke-width="1"/><path d="M7 15.5L14.5 6.5" stroke="#424242" stroke-width="2.4"/><path d="M7 15.5L14.5 6.5" stroke="#fff" stroke-width="1"/><path d="M4 16L6.5 13.5L7.5 15Z" fill="#1a78d2"/></svg>
<div id="kf55e3dfd48" style="position:absolute;left:838px;top:144.0px;font-size:13px;line-height:18px;color:#242424;white-space:nowrap;transform:scaleX(0.7473);transform-origin:left center;">セルのスタイル</div>
<svg style="position:absolute;left:910.5px;top:151.25px;overflow:visible;" width="7" height="4.5" viewBox="0 0 7 4.5"><path d="M0.5 0.5L3.5 3.5L6.5 0.5" fill="none" stroke="#242424" stroke-width="1.2"/></svg>
<div style="position:absolute;left:593px;width:600px;text-align:center;top:167.5px;font-size:13px;line-height:18px;color:#333333;white-space:nowrap;"><span id="kc14be8a788" style="display:inline-block;transform:scaleX(0.7115);transform-origin:center center;">スタイル</span></div>
<div style="position:absolute;left:984px;top:88px;width:1px;height:92px;background:#e0e0e0"></div>
<svg style="position:absolute;left:997px;top:90.5px;overflow:visible;" width="18" height="17" viewBox="0 0 18 17"><rect x="0.5" y="0.5" width="16" height="14.5" fill="#fff" stroke="#424242" stroke-width="1.1"/><path d="M0.5 5H16.5M0.5 10H16.5M5.5 0.5V15M11 0.5V15" stroke="#424242" stroke-width="1"/><rect x="5.5" y="5" width="11" height="5" fill="#1a78d2"/><path d="M9 7.5H3M5 5.5L3 7.5L5 9.5" fill="none" stroke="#fff" stroke-width="1.2"/></svg>
<div id="kaba5add79f" style="position:absolute;left:1018px;top:90.0px;font-size:13px;line-height:18px;color:#242424;white-space:nowrap;transform:scaleX(0.9231);transform-origin:left center;">挿入</div>
<svg style="position:absolute;left:1061.5px;top:97.25px;overflow:visible;" width="7" height="4.5" viewBox="0 0 7 4.5"><path d="M0.5 0.5L3.5 3.5L6.5 0.5" fill="none" stroke="#242424" stroke-width="1.2"/></svg>
<svg style="position:absolute;left:997px;top:118px;overflow:visible;" width="18" height="17" viewBox="0 0 18 17"><rect x="0.5" y="0.5" width="16" height="14.5" fill="#fff" stroke="#424242" stroke-width="1.1"/><path d="M0.5 5H16.5M0.5 10H16.5M5.5 0.5V15M11 0.5V15" stroke="#424242" stroke-width="1"/><rect x="3" y="5" width="7" height="5" fill="#1a78d2"/><path d="M11.5 5.5L15.5 9.5M15.5 5.5L11.5 9.5" stroke="#e02a2a" stroke-width="1.3"/><rect x="11" y="4.5" width="6" height="6" fill="none"/></svg>
<div id="k41288d8cb3" style="position:absolute;left:1018px;top:117.0px;font-size:13px;line-height:18px;color:#242424;white-space:nowrap;transform:scaleX(0.9231);transform-origin:left center;">削除</div>
<svg style="position:absolute;left:1061.5px;top:124.25px;overflow:visible;" width="7" height="4.5" viewBox="0 0 7 4.5"><path d="M0.5 0.5L3.5 3.5L6.5 0.5" fill="none" stroke="#242424" stroke-width="1.2"/></svg>
<svg style="position:absolute;left:997px;top:145px;overflow:visible;" width="18" height="17" viewBox="0 0 18 17"><rect x="0.5" y="0.5" width="16" height="14.5" fill="#fff" stroke="#424242" stroke-width="1.1"/><path d="M0.5 5H16.5M0.5 10H16.5M5.5 0.5V15M11 0.5V15" stroke="#424242" stroke-width="1"/><rect x="3" y="3" width="11" height="9" fill="#b9d6f2" stroke="#1a78d2" stroke-width="1"/><path d="M3 1.5H14" stroke="#1a78d2" stroke-width="1.3"/></svg>
<div id="k0330c6951f" style="position:absolute;left:1018px;top:144.0px;font-size:13px;line-height:18px;color:#242424;white-space:nowrap;transform:scaleX(0.9231);transform-origin:left center;">書式</div>
<svg style="position:absolute;left:1046.5px;top:151.25px;overflow:visible;" width="7" height="4.5" viewBox="0 0 7 4.5"><path d="M0.5 0.5L3.5 3.5L6.5 0.5" fill="none" stroke="#242424" stroke-width="1.2"/></svg>
<div style="position:absolute;left:735px;width:600px;text-align:center;top:167.5px;font-size:13px;line-height:18px;color:#333333;white-space:nowrap;"><span id="kdaf281a644" style="display:inline-block;transform:scaleX(0.8462);transform-origin:center center;">セル</span></div>
<div style="position:absolute;left:1085px;top:88px;width:1px;height:92px;background:#e0e0e0"></div>
<svg style="position:absolute;left:1099px;top:91px;overflow:visible;" width="17" height="16" viewBox="0 0 17 16"><path d="M15 3V1H1.5L8.5 8L1.5 15H15V13" fill="none" stroke="#424242" stroke-width="1.2" stroke-linejoin="round"/></svg>
<svg style="position:absolute;left:1127.5px;top:97.25px;overflow:visible;" width="7" height="4.5" viewBox="0 0 7 4.5"><path d="M0.5 0.5L3.5 3.5L6.5 0.5" fill="none" stroke="#242424" stroke-width="1.2"/></svg>
<svg style="position:absolute;left:1098px;top:118px;overflow:visible;" width="17" height="17" viewBox="0 0 17 17"><rect x="0.6" y="0.6" width="15.5" height="15.5" fill="#fff" stroke="#424242" stroke-width="1.2"/><path d="M0.6 3.5H16" stroke="#424242" stroke-width="1"/><path d="M8.3 6V13M5.5 10.3L8.3 13L11 10.3" fill="none" stroke="#1a78d2" stroke-width="1.2"/></svg>
<svg style="position:absolute;left:1120.5px;top:124.25px;overflow:visible;" width="7" height="4.5" viewBox="0 0 7 4.5"><path d="M0.5 0.5L3.5 3.5L6.5 0.5" fill="none" stroke="#242424" stroke-width="1.2"/></svg>
<svg style="position:absolute;left:1098px;top:145px;overflow:visible;" width="17" height="17" viewBox="0 0 17 17"><path d="M1 11L10 2L15.5 7.5L6.5 16.5Z" fill="#fff" stroke="#a64fc4" stroke-width="1.4" stroke-linejoin="round"/><path d="M1 11L4.5 7.5L10 13L6.5 16.5Z" fill="#b46bcf"/></svg>
<svg style="position:absolute;left:1120.5px;top:151.25px;overflow:visible;" width="7" height="4.5" viewBox="0 0 7 4.5"><path d="M0.5 0.5L3.5 3.5L6.5 0.5" fill="none" stroke="#242424" stroke-width="1.2"/></svg>
<svg style="position:absolute;left:1162px;top:90px;overflow:visible;" width="34" height="32" viewBox="0 0 34 32"><text x="0.5" y="15" font-size="16" fill="#1a78d2" font-family="Liberation Sans">A</text><text x="0.5" y="30" font-size="16" fill="#424242" font-family="Liberation Sans">Z</text><path d="M14.5 9.5H30.5L24.5 17V25.5H20.5V17Z" fill="#f8f8f8" stroke="#424242" stroke-width="1.3" stroke-linejoin="round"/></svg>
<div style="position:absolute;left:877.5px;width:600px;text-align:center;top:125.0px;font-size:12px;line-height:16px;color:#242424;white-space:nowrap;"><span id="k01105bd866" style="display:inline-block;transform:scaleX(0.9000);transform-origin:center center;">並べ替えと</span></div>
<div style="position:absolute;left:867px;width:600px;text-align:center;top:141.0px;font-size:12px;line-height:16px;color:#242424;white-space:nowrap;"><span id="ka1466afd89" style="display:inline-block;transform:scaleX(0.7500);transform-origin:center center;">フィルター</span></div>
<svg style="position:absolute;left:1196.5px;top:147.25px;overflow:visible;" width="7" height="4.5" viewBox="0 0 7 4.5"><path d="M0.5 0.5L3.5 3.5L6.5 0.5" fill="none" stroke="#242424" stroke-width="1.2"/></svg>
<svg style="position:absolute;left:1217px;top:90px;overflow:visible;" width="34" height="32" viewBox="0 0 34 32"><circle cx="21" cy="12" r="9.5" fill="none" stroke="#424242" stroke-width="1.3"/><path d="M14.5 19L1.5 31" stroke="#424242" stroke-width="1.3"/></svg>
<div style="position:absolute;left:933px;width:600px;text-align:center;top:125.0px;font-size:12px;line-height:16px;color:#242424;white-space:nowrap;"><span id="k044a1a9377" style="display:inline-block;transform:scaleX(0.9722);transform-origin:center center;">検索と</span></div>
<div style="position:absolute;left:925px;width:600px;text-align:center;top:141.0px;font-size:12px;line-height:16px;color:#242424;white-space:nowrap;"><span id="k77313184be" style="display:inline-block;transform:scaleX(1.0000);transform-origin:center center;">選択</span></div>
<svg style="position:absolute;left:1243.5px;top:147.25px;overflow:visible;" width="7" height="4.5" viewBox="0 0 7 4.5"><path d="M0.5 0.5L3.5 3.5L6.5 0.5" fill="none" stroke="#242424" stroke-width="1.2"/></svg>
<div style="position:absolute;left:874px;width:600px;text-align:center;top:167.5px;font-size:13px;line-height:18px;color:#333333;white-space:nowrap;"><span id="k6a72aca90d" style="display:inline-block;transform:scaleX(0.9231);transform-origin:center center;">編集</span></div>
<div style="position:absolute;left:1263.5px;top:88px;width:1px;height:92px;background:#e0e0e0"></div>
<svg style="position:absolute;left:1282px;top:90px;overflow:visible;" width="31" height="31" viewBox="0 0 31 31"><path d="M13.5 1.2H1.2V29.8H22.8V14" fill="none" stroke="#1a78d2" stroke-width="1.4"/><g transform="rotate(-45 15 14)"><rect x="5" y="11" width="12" height="6" rx="0.5" fill="#fff" stroke="#1a78d2" stroke-width="1.4"/><rect x="7.5" y="13" width="7" height="2" fill="none" stroke="#1a78d2" stroke-width="1"/><rect x="18.5" y="10.5" width="6" height="7" fill="#fff" stroke="#1a78d2" stroke-width="1.4"/><path d="M18 10V18" stroke="#1a78d2" stroke-width="2.2"/><rect x="24.5" y="11.5" width="4" height="5" fill="#fff" stroke="#1a78d2" stroke-width="1.3"/></g></svg>
<div style="position:absolute;left:994px;width:600px;text-align:center;top:125.0px;font-size:12px;line-height:16px;color:#242424;white-space:nowrap;"><span id="k0368227d61" style="display:inline-block;transform:scaleX(1.0417);transform-origin:center center;">秘密</span></div>
<div style="position:absolute;left:989px;width:600px;text-align:center;top:141.0px;font-size:12px;line-height:16px;color:#242424;white-space:nowrap;"><span id="k7d2d9fd4e8" style="display:inline-block;transform:scaleX(1.0000);transform-origin:center center;">度</span></div>
<svg style="position:absolute;left:1298.5px;top:147.25px;overflow:visible;" width="7" height="4.5" viewBox="0 0 7 4.5"><path d="M0.5 0.5L3.5 3.5L6.5 0.5" fill="none" stroke="#242424" stroke-width="1.2"/></svg>
<div style="position:absolute;left:994px;width:600px;text-align:center;top:167.5px;font-size:13px;line-height:18px;color:#333333;white-space:nowrap;"><span id="k914d895cd2" style="display:inline-block;transform:scaleX(0.9231);transform-origin:center center;">秘密度</span></div>
<div style="position:absolute;left:1324px;top:88px;width:1px;height:92px;background:#e0e0e0"></div>
<svg style="position:absolute;left:1339px;top:90px;overflow:visible;" width="32" height="32" viewBox="0 0 32 32"><rect x="1" y="1" width="29.5" height="29.5" fill="#fff" stroke="#e4532b" stroke-width="1.6"/><rect x="5" y="5" width="9.5" height="9.5" fill="none" stroke="#e4532b" stroke-width="1.4"/><rect x="17" y="5" width="9.5" height="9.5" fill="none" stroke="#e4532b" stroke-width="1.4"/><rect x="5" y="17" width="9.5" height="9.5" fill="none" stroke="#e4532b" stroke-width="1.4"/><rect x="17" y="17" width="9.5" height="9.5" fill="none" stroke="#e4532b" stroke-width="1.4"/></svg>
<div style="position:absolute;left:1055px;width:600px;text-align:center;top:125.0px;font-size:12px;line-height:16px;color:#242424;white-space:nowrap;"><span id="kb0824703fa" style="display:inline-block;transform:scaleX(0.8333);transform-origin:center center;">アド</span></div>
<div style="position:absolute;left:1055px;width:600px;text-align:center;top:141.0px;font-size:12px;line-height:16px;color:#242424;white-space:nowrap;"><span id="kde2918761c" style="display:inline-block;transform:scaleX(0.7917);transform-origin:center center;">イン</span></div>
<div style="position:absolute;left:1054px;width:600px;text-align:center;top:167.5px;font-size:13px;line-height:18px;color:#333333;white-space:nowrap;"><span id="ke537a65954" style="display:inline-block;transform:scaleX(0.7115);transform-origin:center center;">アドイン</span></div>
<div style="position:absolute;left:1384.5px;top:88px;width:1px;height:92px;background:#e0e0e0"></div>
<svg style="position:absolute;left:1402px;top:92px;overflow:visible;" width="31" height="29" viewBox="0 0 31 29"><defs><linearGradient id="cg1" x1="0" y1="0" x2="0" y2="1"><stop offset="0" stop-color="#3a94dd"/><stop offset="0.35" stop-color="#3f9bd0"/><stop offset="0.6" stop-color="#62b06a"/><stop offset="1" stop-color="#f7ad4c"/></linearGradient><linearGradient id="cg2" x1="0" y1="0" x2="0" y2="1"><stop offset="0" stop-color="#c94dbd"/><stop offset="0.45" stop-color="#d452a8"/><stop offset="0.7" stop-color="#ea7f6a"/><stop offset="1" stop-color="#f2a545"/></linearGradient></defs><path d="M7 0H19C21 0 22.5 1.5 23 4L24 8H17.5L13 20H3C1 20 0 18.5 0.3 16.5L3.5 4C4.2 1.5 5.5 0 7 0Z" fill="url(#cg1)"/><path d="M17 0C20 0 22 1.5 22.8 4.5L24 8.5H18Z" fill="#1a5fc2"/><path d="M19.5 8H27C29.5 8 30.5 10 30 12L26.8 24.5C26.3 26.8 24.8 28 22.5 28H12L16 17Z" fill="url(#cg2)"/><path d="M8 20H14.5L12 28H11.5C10 28 9 27 8.6 25.5Z" fill="#e5552b"/></svg>
<div style="position:absolute;left:1116.5px;width:600px;text-align:center;top:123.5px;font-size:15.5px;line-height:21px;color:#242424;white-space:nowrap;"><span id="k75b27bc5e0" style="display:inline-block;transform:scaleX(0.8497);transform-origin:center center;">Copilot</span></div>
<svg style="position:absolute;left:1413.5px;top:147.75px;overflow:visible;" width="7" height="4.5" viewBox="0 0 7 4.5"><path d="M0.5 0.5L3.5 3.5L6.5 0.5" fill="none" stroke="#242424" stroke-width="1.2"/></svg>
<div style="position:absolute;left:1448px;top:88px;width:1px;height:92px;background:#e0e0e0"></div>
<svg style="position:absolute;left:1470px;top:168px;overflow:visible;" width="12" height="8" viewBox="0 0 12 8"><path d="M1 1.5L6 6.5L11 1.5" fill="none" stroke="#424242" stroke-width="1.3"/></svg>
<div style="position:absolute;left:9px;top:196px;width:104px;height:26px;background:#fff;border-radius:5px;box-shadow:0 1px 0 rgba(0,0,0,0.06)"></div>
<div id="k89f73d55ea" style="position:absolute;left:12px;top:199.0px;font-size:15px;line-height:21px;color:#242424;white-space:nowrap;transform:scaleX(0.9109);transform-origin:left center;">I12</div>
<svg style="position:absolute;left:100.5px;top:206.5px;overflow:visible;" width="10" height="6.0" viewBox="0 0 10 6.0"><path d="M0.5 0.5L5.0 5.0L9.5 0.5" fill="none" stroke="#242424" stroke-width="1.4"/></svg>
<div style="position:absolute;left:122.5px;top:202.5px;width:3px;height:3px;background:#242424;border-radius:50%"></div>
<div style="position:absolute;left:122.5px;top:208px;width:3px;height:3px;background:#242424;border-radius:50%"></div>
<div style="position:absolute;left:122.5px;top:213.5px;width:3px;height:3px;background:#242424;border-radius:50%"></div>
<div style="position:absolute;left:135px;top:196px;width:87px;height:26px;background:#fff;border-radius:5px"></div>
<svg style="position:absolute;left:140px;top:202px;overflow:visible;" width="14" height="14" viewBox="0 0 14 14"><path d="M1 1L13 13M13 1L1 13" stroke="#b0b0b0" stroke-width="1.2"/></svg>
<svg style="position:absolute;left:163px;top:202px;overflow:visible;" width="18" height="13" viewBox="0 0 18 13"><path d="M1 7L6 12L17 1" fill="none" stroke="#b0b0b0" stroke-width="1.2"/></svg>
<div style="position:absolute;left:-101.5px;width:600px;text-align:center;top:198.0px;font-size:16px;line-height:22px;color:#242424;white-space:nowrap;font-family:'Liberation Serif',serif"><span id="k16c9dd6949" style="display:inline-block;transform:scaleX(1.0504);transform-origin:center center;"><i><b>fx</b></i></span></div>
<svg style="position:absolute;left:211.5px;top:207.0px;overflow:visible;" width="8" height="5.0" viewBox="0 0 8 5.0"><path d="M0.5 0.5L4.0 4.0L7.5 0.5" fill="none" stroke="#555" stroke-width="1.1"/></svg>
<div style="position:absolute;left:228px;top:196px;width:1264px;height:26px;background:#fff;border-radius:5px"></div>
<div id="k1fc955e4a7" style="position:absolute;left:240px;top:200.0px;font-size:14px;line-height:19px;color:#a2a2a2;white-space:nowrap;transform:scaleX(1.0652);transform-origin:left center;font-family:'Liberation Mono',monospace">=COPILOT("この表は A〜C 店舗の売上データです。商品ごと・店舗ごとの数量を集計したピボット風の表を作ってください。行に商品名、列に店舗（店舗A,店舗B,店舗C）、値に</div>
<svg style="position:absolute;left:1476.5px;top:205.25px;overflow:visible;" width="11" height="6.5" viewBox="0 0 11 6.5"><path d="M0.5 0.5L5.5 5.5L10.5 0.5" fill="none" stroke="#242424" stroke-width="1.4"/></svg>
<div style="position:absolute;left:0px;top:230px;width:1480px;height:664px;background:#fff"></div>
<div style="position:absolute;left:0px;top:230px;width:1480px;height:24px;background:#f0f0f0"></div>
<div style="position:absolute;left:0px;top:254px;width:32px;height:640px;background:#f0f0f0"></div>
<div style="position:absolute;left:546px;top:230px;width:82px;height:24px;background:#d3d3d3"></div>
<div style="position:absolute;left:546px;top:252px;width:82px;height:2px;background:#107c41"></div>
<div style="position:absolute;left:0px;top:529px;width:32px;height:25px;background:#d3d3d3"></div>
<div style="position:absolute;left:107px;top:254px;width:1px;height:640px;background:#e6e6e6"></div>
<div style="position:absolute;left:107px;top:230px;width:1px;height:24px;background:#c4c4c8"></div>
<div style="position:absolute;left:209px;top:254px;width:1px;height:640px;background:#e6e6e6"></div>
<div style="position:absolute;left:209px;top:230px;width:1px;height:24px;background:#c4c4c8"></div>
<div style="position:absolute;left:249px;top:254px;width:1px;height:640px;background:#e6e6e6"></div>
<div style="position:absolute;left:249px;top:230px;width:1px;height:24px;background:#c4c4c8"></div>
<div style="position:absolute;left:289px;top:254px;width:1px;height:640px;background:#e6e6e6"></div>
<div style="position:absolute;left:289px;top:230px;width:1px;height:24px;background:#c4c4c8"></div>
<div style="position:absolute;left:329px;top:254px;width:1px;height:640px;background:#e6e6e6"></div>
<div style="position:absolute;left:329px;top:230px;width:1px;height:24px;background:#c4c4c8"></div>
<div style="position:absolute;left:402px;top:254px;width:1px;height:640px;background:#e6e6e6"></div>
<div style="position:absolute;left:402px;top:230px;width:1px;height:24px;background:#c4c4c8"></div>
<div style="position:absolute;left:474px;top:254px;width:1px;height:640px;background:#e6e6e6"></div>
<div style="position:absolute;left:474px;top:230px;width:1px;height:24px;background:#c4c4c8"></div>
<div style="position:absolute;left:546px;top:254px;width:1px;height:640px;background:#e6e6e6"></div>
<div style="position:absolute;left:546px;top:230px;width:1px;height:24px;background:#c4c4c8"></div>
<div style="position:absolute;left:628px;top:254px;width:1px;height:640px;background:#e6e6e6"></div>
<div style="position:absolute;left:628px;top:230px;width:1px;height:24px;background:#c4c4c8"></div>
<div style="position:absolute;left:729px;top:254px;width:1px;height:640px;background:#e6e6e6"></div>
<div style="position:absolute;left:729px;top:230px;width:1px;height:24px;background:#c4c4c8"></div>
<div style="position:absolute;left:800px;top:254px;width:1px;height:640px;background:#e6e6e6"></div>
<div style="position:absolute;left:800px;top:230px;width:1px;height:24px;background:#c4c4c8"></div>
<div style="position:absolute;left:902px;top:254px;width:1px;height:640px;background:#e6e6e6"></div>
<div style="position:absolute;left:902px;top:230px;width:1px;height:24px;background:#c4c4c8"></div>
<div style="position:absolute;left:942px;top:254px;width:1px;height:640px;background:#e6e6e6"></div>
<div style="position:absolute;left:942px;top:230px;width:1px;height:24px;background:#c4c4c8"></div>
<div style="position:absolute;left:1015px;top:254px;width:1px;height:640px;background:#e6e6e6"></div>
<div style="position:absolute;left:1015px;top:230px;width:1px;height:24px;background:#c4c4c8"></div>
<div style="position:absolute;left:1087px;top:254px;width:1px;height:640px;background:#e6e6e6"></div>
<div style="position:absolute;left:1087px;top:230px;width:1px;height:24px;background:#c4c4c8"></div>
<div style="position:absolute;left:1159px;top:254px;width:1px;height:640px;background:#e6e6e6"></div>
<div style="position:absolute;left:1159px;top:230px;width:1px;height:24px;background:#c4c4c8"></div>
<div style="position:absolute;left:1232px;top:254px;width:1px;height:640px;background:#e6e6e6"></div>
<div style="position:absolute;left:1232px;top:230px;width:1px;height:24px;background:#c4c4c8"></div>
<div style="position:absolute;left:1304px;top:254px;width:1px;height:640px;background:#e6e6e6"></div>
<div style="position:absolute;left:1304px;top:230px;width:1px;height:24px;background:#c4c4c8"></div>
<div style="position:absolute;left:1377px;top:254px;width:1px;height:640px;background:#e6e6e6"></div>
<div style="position:absolute;left:1377px;top:230px;width:1px;height:24px;background:#c4c4c8"></div>
<div style="position:absolute;left:1449px;top:254px;width:1px;height:640px;background:#e6e6e6"></div>
<div style="position:absolute;left:1449px;top:230px;width:1px;height:24px;background:#c4c4c8"></div>
<div style="position:absolute;left:32px;top:279px;width:1448px;height:1px;background:#e6e6e6"></div>
<div style="position:absolute;left:0px;top:279px;width:32px;height:1px;background:#d6d6d6"></div>
<div style="position:absolute;left:32px;top:304px;width:1448px;height:1px;background:#e6e6e6"></div>
<div style="position:absolute;left:0px;top:304px;width:32px;height:1px;background:#d6d6d6"></div>
<div style="position:absolute;left:32px;top:329px;width:1448px;height:1px;background:#e6e6e6"></div>
<div style="position:absolute;left:0px;top:329px;width:32px;height:1px;background:#d6d6d6"></div>
<div style="position:absolute;left:32px;top:354px;width:1448px;height:1px;background:#e6e6e6"></div>
<div style="position:absolute;left:0px;top:354px;width:32px;height:1px;background:#d6d6d6"></div>
<div style="position:absolute;left:32px;top:379px;width:1448px;height:1px;background:#e6e6e6"></div>
<div style="position:absolute;left:0px;top:379px;width:32px;height:1px;background:#d6d6d6"></div>
<div style="position:absolute;left:32px;top:404px;width:1448px;height:1px;background:#e6e6e6"></div>
<div style="position:absolute;left:0px;top:404px;width:32px;height:1px;background:#d6d6d6"></div>
<div style="position:absolute;left:32px;top:429px;width:1448px;height:1px;background:#e6e6e6"></div>
<div style="position:absolute;left:0px;top:429px;width:32px;height:1px;background:#d6d6d6"></div>
<div style="position:absolute;left:32px;top:454px;width:1448px;height:1px;background:#e6e6e6"></div>
<div style="position:absolute;left:0px;top:454px;width:32px;height:1px;background:#d6d6d6"></div>
<div style="position:absolute;left:32px;top:479px;width:1448px;height:1px;background:#e6e6e6"></div>
<div style="position:absolute;left:0px;top:479px;width:32px;height:1px;background:#d6d6d6"></div>
<div style="position:absolute;left:32px;top:504px;width:1448px;height:1px;background:#e6e6e6"></div>
<div style="position:absolute;left:0px;top:504px;width:32px;height:1px;background:#d6d6d6"></div>
<div style="position:absolute;left:32px;top:529px;width:1448px;height:1px;background:#e6e6e6"></div>
<div style="position:absolute;left:0px;top:529px;width:32px;height:1px;background:#d6d6d6"></div>
<div style="position:absolute;left:32px;top:554px;width:1448px;height:1px;background:#e6e6e6"></div>
<div style="position:absolute;left:0px;top:554px;width:32px;height:1px;background:#d6d6d6"></div>
<div style="position:absolute;left:32px;top:579px;width:1448px;height:1px;background:#e6e6e6"></div>
<div style="position:absolute;left:0px;top:579px;width:32px;height:1px;background:#d6d6d6"></div>
<div style="position:absolute;left:32px;top:604px;width:1448px;height:1px;background:#e6e6e6"></div>
<div style="position:absolute;left:0px;top:604px;width:32px;height:1px;background:#d6d6d6"></div>
<div style="position:absolute;left:32px;top:629px;width:1448px;height:1px;background:#e6e6e6"></div>
<div style="position:absolute;left:0px;top:629px;width:32px;height:1px;background:#d6d6d6"></div>
<div style="position:absolute;left:32px;top:654px;width:1448px;height:1px;background:#e6e6e6"></div>
<div style="position:absolute;left:0px;top:654px;width:32px;height:1px;background:#d6d6d6"></div>
<div style="position:absolute;left:32px;top:679px;width:1448px;height:1px;background:#e6e6e6"></div>
<div style="position:absolute;left:0px;top:679px;width:32px;height:1px;background:#d6d6d6"></div>
<div style="position:absolute;left:32px;top:704px;width:1448px;height:1px;background:#e6e6e6"></div>
<div style="position:absolute;left:0px;top:704px;width:32px;height:1px;background:#d6d6d6"></div>
<div style="position:absolute;left:32px;top:729px;width:1448px;height:1px;background:#e6e6e6"></div>
<div style="position:absolute;left:0px;top:729px;width:32px;height:1px;background:#d6d6d6"></div>
<div style="position:absolute;left:32px;top:754px;width:1448px;height:1px;background:#e6e6e6"></div>
<div style="position:absolute;left:0px;top:754px;width:32px;height:1px;background:#d6d6d6"></div>
<div style="position:absolute;left:32px;top:779px;width:1448px;height:1px;background:#e6e6e6"></div>
<div style="position:absolute;left:0px;top:779px;width:32px;height:1px;background:#d6d6d6"></div>
<div style="position:absolute;left:32px;top:804px;width:1448px;height:1px;background:#e6e6e6"></div>
<div style="position:absolute;left:0px;top:804px;width:32px;height:1px;background:#d6d6d6"></div>
<div style="position:absolute;left:32px;top:829px;width:1448px;height:1px;background:#e6e6e6"></div>
<div style="position:absolute;left:0px;top:829px;width:32px;height:1px;background:#d6d6d6"></div>
<div style="position:absolute;left:32px;top:854px;width:1448px;height:1px;background:#e6e6e6"></div>
<div style="position:absolute;left:0px;top:854px;width:32px;height:1px;background:#d6d6d6"></div>
<div style="position:absolute;left:32px;top:879px;width:1448px;height:1px;background:#e6e6e6"></div>
<div style="position:absolute;left:0px;top:879px;width:32px;height:1px;background:#d6d6d6"></div>
<div style="position:absolute;left:0px;top:253px;width:1480px;height:2px;background:#d0d0d0"></div>
<div style="position:absolute;left:32px;top:233px;width:1px;height:664px;background:#c4c4c8"></div>
<div style="position:absolute;left:30px;top:529px;width:2px;height:25px;background:#107c41"></div>
<svg style="position:absolute;left:11px;top:232px;overflow:visible;" width="20" height="20" viewBox="0 0 20 20"><path d="M19.5 0.5 L19.5 19.5 L0.5 19.5 Z" fill="#bcbcbc"/></svg>
<div style="position:absolute;left:-230.0px;width:600px;text-align:center;top:229.5px;font-size:13.5px;line-height:18px;color:#222;white-space:nowrap;"><span>A</span></div>
<div style="position:absolute;left:-141.5px;width:600px;text-align:center;top:229.5px;font-size:13.5px;line-height:18px;color:#222;white-space:nowrap;"><span>B</span></div>
<div style="position:absolute;left:-70.5px;width:600px;text-align:center;top:229.5px;font-size:13.5px;line-height:18px;color:#222;white-space:nowrap;"><span>C</span></div>
<div style="position:absolute;left:-30.5px;width:600px;text-align:center;top:229.5px;font-size:13.5px;line-height:18px;color:#222;white-space:nowrap;"><span>D</span></div>
<div style="position:absolute;left:9.5px;width:600px;text-align:center;top:229.5px;font-size:13.5px;line-height:18px;color:#222;white-space:nowrap;"><span>E</span></div>
<div style="position:absolute;left:66.0px;width:600px;text-align:center;top:229.5px;font-size:13.5px;line-height:18px;color:#222;white-space:nowrap;"><span>F</span></div>
<div style="position:absolute;left:138.5px;width:600px;text-align:center;top:229.5px;font-size:13.5px;line-height:18px;color:#222;white-space:nowrap;"><span>G</span></div>
<div style="position:absolute;left:210.5px;width:600px;text-align:center;top:229.5px;font-size:13.5px;line-height:18px;color:#222;white-space:nowrap;"><span>H</span></div>
<svg style="position:absolute;left:584px;top:233.5px;overflow:visible;" width="7" height="10" viewBox="0 0 7 10"><path d="M3.5 0.5V9.5M1 0.8H6M1 9.2H6" fill="none" stroke="#107c41" stroke-width="1.5"/></svg>
<div style="position:absolute;left:379.0px;width:600px;text-align:center;top:229.5px;font-size:13.5px;line-height:18px;color:#222;white-space:nowrap;"><span>J</span></div>
<div style="position:absolute;left:465.0px;width:600px;text-align:center;top:229.5px;font-size:13.5px;line-height:18px;color:#222;white-space:nowrap;"><span>K</span></div>
<div style="position:absolute;left:551.5px;width:600px;text-align:center;top:229.5px;font-size:13.5px;line-height:18px;color:#222;white-space:nowrap;"><span>L</span></div>
<div style="position:absolute;left:622.5px;width:600px;text-align:center;top:229.5px;font-size:13.5px;line-height:18px;color:#222;white-space:nowrap;"><span>M</span></div>
<div style="position:absolute;left:679.0px;width:600px;text-align:center;top:229.5px;font-size:13.5px;line-height:18px;color:#222;white-space:nowrap;"><span>N</span></div>
<div style="position:absolute;left:751.5px;width:600px;text-align:center;top:229.5px;font-size:13.5px;line-height:18px;color:#222;white-space:nowrap;"><span>O</span></div>
<div style="position:absolute;left:823.5px;width:600px;text-align:center;top:229.5px;font-size:13.5px;line-height:18px;color:#222;white-space:nowrap;"><span>P</span></div>
<div style="position:absolute;left:896.0px;width:600px;text-align:center;top:229.5px;font-size:13.5px;line-height:18px;color:#222;white-space:nowrap;"><span>Q</span></div>
<div style="position:absolute;left:968.5px;width:600px;text-align:center;top:229.5px;font-size:13.5px;line-height:18px;color:#222;white-space:nowrap;"><span>R</span></div>
<div style="position:absolute;left:1041.0px;width:600px;text-align:center;top:229.5px;font-size:13.5px;line-height:18px;color:#222;white-space:nowrap;"><span>S</span></div>
<div style="position:absolute;left:1113.5px;width:600px;text-align:center;top:229.5px;font-size:13.5px;line-height:18px;color:#222;white-space:nowrap;"><span>T</span></div>
<div style="position:absolute;left:-283.5px;width:600px;text-align:center;top:257.5px;font-size:14px;line-height:19px;color:#222;white-space:nowrap;"><span>1</span></div>
<div style="position:absolute;left:-283.5px;width:600px;text-align:center;top:282.5px;font-size:14px;line-height:19px;color:#222;white-space:nowrap;"><span>2</span></div>
<div style="position:absolute;left:-283.5px;width:600px;text-align:center;top:307.5px;font-size:14px;line-height:19px;color:#222;white-space:nowrap;"><span>3</span></div>
<div style="position:absolute;left:-283.5px;width:600px;text-align:center;top:332.5px;font-size:14px;line-height:19px;color:#222;white-space:nowrap;"><span>4</span></div>
<div style="position:absolute;left:-283.5px;width:600px;text-align:center;top:357.5px;font-size:14px;line-height:19px;color:#222;white-space:nowrap;"><span>5</span></div>
<div style="position:absolute;left:-283.5px;width:600px;text-align:center;top:382.5px;font-size:14px;line-height:19px;color:#222;white-space:nowrap;"><span>6</span></div>
<div style="position:absolute;left:-283.5px;width:600px;text-align:center;top:407.5px;font-size:14px;line-height:19px;color:#222;white-space:nowrap;"><span>7</span></div>
<div style="position:absolute;left:-283.5px;width:600px;text-align:center;top:432.5px;font-size:14px;line-height:19px;color:#222;white-space:nowrap;"><span>8</span></div>
<div style="position:absolute;left:-283.5px;width:600px;text-align:center;top:457.5px;font-size:14px;line-height:19px;color:#222;white-space:nowrap;"><span>9</span></div>
<div style="position:absolute;left:-283.5px;width:600px;text-align:center;top:482.5px;font-size:14px;line-height:19px;color:#222;white-space:nowrap;"><span>10</span></div>
<div style="position:absolute;left:-283.5px;width:600px;text-align:center;top:507.5px;font-size:14px;line-height:19px;color:#222;white-space:nowrap;"><span>11</span></div>
<div style="position:absolute;left:-283.5px;width:600px;text-align:center;top:532.5px;font-size:14px;line-height:19px;color:#107c41;white-space:nowrap;"><span>12</span></div>
<div style="position:absolute;left:-283.5px;width:600px;text-align:center;top:557.5px;font-size:14px;line-height:19px;color:#222;white-space:nowrap;"><span>13</span></div>
<div style="position:absolute;left:-283.5px;width:600px;text-align:center;top:582.5px;font-size:14px;line-height:19px;color:#222;white-space:nowrap;"><span>14</span></div>
<div style="position:absolute;left:-283.5px;width:600px;text-align:center;top:607.5px;font-size:14px;line-height:19px;color:#222;white-space:nowrap;"><span>15</span></div>
<div style="position:absolute;left:-283.5px;width:600px;text-align:center;top:632.5px;font-size:14px;line-height:19px;color:#222;white-space:nowrap;"><span>16</span></div>
<div style="position:absolute;left:-283.5px;width:600px;text-align:center;top:657.5px;font-size:14px;line-height:19px;color:#222;white-space:nowrap;"><span>17</span></div>
<div style="position:absolute;left:-283.5px;width:600px;text-align:center;top:682.5px;font-size:14px;line-height:19px;color:#222;white-space:nowrap;"><span>18</span></div>
<div style="position:absolute;left:-283.5px;width:600px;text-align:center;top:707.5px;font-size:14px;line-height:19px;color:#222;white-space:nowrap;"><span>19</span></div>
<div style="position:absolute;left:-283.5px;width:600px;text-align:center;top:732.5px;font-size:14px;line-height:19px;color:#222;white-space:nowrap;"><span>20</span></div>
<div style="position:absolute;left:-283.5px;width:600px;text-align:center;top:757.5px;font-size:14px;line-height:19px;color:#222;white-space:nowrap;"><span>21</span></div>
<div style="position:absolute;left:-283.5px;width:600px;text-align:center;top:782.5px;font-size:14px;line-height:19px;color:#222;white-space:nowrap;"><span>22</span></div>
<div style="position:absolute;left:-283.5px;width:600px;text-align:center;top:807.5px;font-size:14px;line-height:19px;color:#222;white-space:nowrap;"><span>23</span></div>
<div style="position:absolute;left:-283.5px;width:600px;text-align:center;top:832.5px;font-size:14px;line-height:19px;color:#222;white-space:nowrap;"><span>24</span></div>
<div style="position:absolute;left:-283.5px;width:600px;text-align:center;top:857.5px;font-size:14px;line-height:19px;color:#222;white-space:nowrap;"><span>25</span></div>
<div style="position:absolute;left:-283.5px;width:600px;text-align:center;top:882.5px;font-size:14px;line-height:19px;color:#222;white-space:nowrap;"><span>26</span></div>
<div style="position:absolute;left:35px;top:255.0px;font-size:15px;line-height:21px;color:#222;white-space:nowrap;">日付</div>
<div style="position:absolute;left:110px;top:255.0px;font-size:15px;line-height:21px;color:#222;white-space:nowrap;">商品名</div>
<div style="position:absolute;left:212px;top:255.0px;font-size:15px;line-height:21px;color:#222;white-space:nowrap;">数量</div>
<div style="position:absolute;left:252px;top:255.0px;font-size:15px;line-height:21px;color:#222;white-space:nowrap;">単価</div>
<div style="position:absolute;left:292px;top:255.0px;font-size:15px;line-height:21px;color:#222;white-space:nowrap;">店舗</div>
<div id="kfa26ded9e0" style="position:absolute;right:1395.5px;top:280.0px;font-size:16px;line-height:22px;color:#222;white-space:nowrap;transform:scaleX(1.0115);transform-origin:right center;">2025/1/1</div>
<div style="position:absolute;left:110px;top:280.0px;font-size:15px;line-height:21px;color:#222;white-space:nowrap;">コーヒー</div>
<div style="position:absolute;right:1253.5px;top:280.0px;font-size:16px;line-height:22px;color:#222;white-space:nowrap;transform:scaleX(0.92);transform-origin:right center">12</div>
<div style="position:absolute;right:1213.5px;top:280.0px;font-size:16px;line-height:22px;color:#222;white-space:nowrap;transform:scaleX(0.92);transform-origin:right center">350</div>
<div style="position:absolute;left:292px;top:280.0px;font-size:15px;line-height:21px;color:#222;white-space:nowrap;">A</div>
<div id="ke2e0a9faaf" style="position:absolute;right:1395.5px;top:305.0px;font-size:16px;line-height:22px;color:#222;white-space:nowrap;transform:scaleX(1.0115);transform-origin:right center;">2025/1/1</div>
<div style="position:absolute;left:110px;top:305.0px;font-size:15px;line-height:21px;color:#222;white-space:nowrap;">サンドイッチ</div>
<div style="position:absolute;right:1253.5px;top:305.0px;font-size:16px;line-height:22px;color:#222;white-space:nowrap;transform:scaleX(0.92);transform-origin:right center">5</div>
<div style="position:absolute;right:1213.5px;top:305.0px;font-size:16px;line-height:22px;color:#222;white-space:nowrap;transform:scaleX(0.92);transform-origin:right center">480</div>
<div style="position:absolute;left:292px;top:305.0px;font-size:15px;line-height:21px;color:#222;white-space:nowrap;">A</div>
<div id="k64a433a0f5" style="position:absolute;right:1395.5px;top:330.0px;font-size:16px;line-height:22px;color:#222;white-space:nowrap;transform:scaleX(1.0115);transform-origin:right center;">2025/1/2</div>
<div style="position:absolute;left:110px;top:330.0px;font-size:15px;line-height:21px;color:#222;white-space:nowrap;">コーヒー</div>
<div style="position:absolute;right:1253.5px;top:330.0px;font-size:16px;line-height:22px;color:#222;white-space:nowrap;transform:scaleX(0.92);transform-origin:right center">9</div>
<div style="position:absolute;right:1213.5px;top:330.0px;font-size:16px;line-height:22px;color:#222;white-space:nowrap;transform:scaleX(0.92);transform-origin:right center">350</div>
<div style="position:absolute;left:292px;top:330.0px;font-size:15px;line-height:21px;color:#222;white-space:nowrap;">A</div>
<div id="k2d1989f32a" style="position:absolute;right:1395.5px;top:355.0px;font-size:16px;line-height:22px;color:#222;white-space:nowrap;transform:scaleX(1.0115);transform-origin:right center;">2025/1/2</div>
<div style="position:absolute;left:110px;top:355.0px;font-size:15px;line-height:21px;color:#222;white-space:nowrap;">紅茶</div>
<div style="position:absolute;right:1253.5px;top:355.0px;font-size:16px;line-height:22px;color:#222;white-space:nowrap;transform:scaleX(0.92);transform-origin:right center">7</div>
<div style="position:absolute;right:1213.5px;top:355.0px;font-size:16px;line-height:22px;color:#222;white-space:nowrap;transform:scaleX(0.92);transform-origin:right center">300</div>
<div style="position:absolute;left:292px;top:355.0px;font-size:15px;line-height:21px;color:#222;white-space:nowrap;">A</div>
<div id="kf6e897c4dc" style="position:absolute;right:1395.5px;top:380.0px;font-size:16px;line-height:22px;color:#222;white-space:nowrap;transform:scaleX(1.0115);transform-origin:right center;">2025/1/3</div>
<div style="position:absolute;left:110px;top:380.0px;font-size:15px;line-height:21px;color:#222;white-space:nowrap;">サンドイッチ</div>
<div style="position:absolute;right:1253.5px;top:380.0px;font-size:16px;line-height:22px;color:#222;white-space:nowrap;transform:scaleX(0.92);transform-origin:right center">8</div>
<div style="position:absolute;right:1213.5px;top:380.0px;font-size:16px;line-height:22px;color:#222;white-space:nowrap;transform:scaleX(0.92);transform-origin:right center">480</div>
<div style="position:absolute;left:292px;top:380.0px;font-size:15px;line-height:21px;color:#222;white-space:nowrap;">A</div>
<div id="k92f1a9a821" style="position:absolute;right:1395.5px;top:405.0px;font-size:16px;line-height:22px;color:#222;white-space:nowrap;transform:scaleX(1.0115);transform-origin:right center;">2025/1/1</div>
<div style="position:absolute;left:110px;top:405.0px;font-size:15px;line-height:21px;color:#222;white-space:nowrap;">コーヒー</div>
<div style="position:absolute;right:1253.5px;top:405.0px;font-size:16px;line-height:22px;color:#222;white-space:nowrap;transform:scaleX(0.92);transform-origin:right center">15</div>
<div style="position:absolute;right:1213.5px;top:405.0px;font-size:16px;line-height:22px;color:#222;white-space:nowrap;transform:scaleX(0.92);transform-origin:right center">350</div>
<div style="position:absolute;left:292px;top:405.0px;font-size:15px;line-height:21px;color:#222;white-space:nowrap;">B</div>
<div id="k707ad2c0c4" style="position:absolute;right:1395.5px;top:430.0px;font-size:16px;line-height:22px;color:#222;white-space:nowrap;transform:scaleX(1.0115);transform-origin:right center;">2025/1/1</div>
<div style="position:absolute;left:110px;top:430.0px;font-size:15px;line-height:21px;color:#222;white-space:nowrap;">紅茶</div>
<div style="position:absolute;right:1253.5px;top:430.0px;font-size:16px;line-height:22px;color:#222;white-space:nowrap;transform:scaleX(0.92);transform-origin:right center">10</div>
<div style="position:absolute;right:1213.5px;top:430.0px;font-size:16px;line-height:22px;color:#222;white-space:nowrap;transform:scaleX(0.92);transform-origin:right center">300</div>
<div style="position:absolute;left:292px;top:430.0px;font-size:15px;line-height:21px;color:#222;white-space:nowrap;">B</div>
<div id="k005bc32a78" style="position:absolute;right:1395.5px;top:455.0px;font-size:16px;line-height:22px;color:#222;white-space:nowrap;transform:scaleX(1.0115);transform-origin:right center;">2025/1/2</div>
<div style="position:absolute;left:110px;top:455.0px;font-size:15px;line-height:21px;color:#222;white-space:nowrap;">コーヒー</div>
<div style="position:absolute;right:1253.5px;top:455.0px;font-size:16px;line-height:22px;color:#222;white-space:nowrap;transform:scaleX(0.92);transform-origin:right center">11</div>
<div style="position:absolute;right:1213.5px;top:455.0px;font-size:16px;line-height:22px;color:#222;white-space:nowrap;transform:scaleX(0.92);transform-origin:right center">350</div>
<div style="position:absolute;left:292px;top:455.0px;font-size:15px;line-height:21px;color:#222;white-space:nowrap;">B</div>
<div id="k2a9b6b22ec" style="position:absolute;right:1395.5px;top:480.0px;font-size:16px;line-height:22px;color:#222;white-space:nowrap;transform:scaleX(1.0115);transform-origin:right center;">2025/1/2</div>
<div style="position:absolute;left:110px;top:480.0px;font-size:15px;line-height:21px;color:#222;white-space:nowrap;">サンドイッチ</div>
<div style="position:absolute;right:1253.5px;top:480.0px;font-size:16px;line-height:22px;color:#222;white-space:nowrap;transform:scaleX(0.92);transform-origin:right center">4</div>
<div style="position:absolute;right:1213.5px;top:480.0px;font-size:16px;line-height:22px;color:#222;white-space:nowrap;transform:scaleX(0.92);transform-origin:right center">480</div>
<div style="position:absolute;left:292px;top:480.0px;font-size:15px;line-height:21px;color:#222;white-space:nowrap;">B</div>
<div id="k5e6a26e68c" style="position:absolute;right:1395.5px;top:505.0px;font-size:16px;line-height:22px;color:#222;white-space:nowrap;transform:scaleX(1.0115);transform-origin:right center;">2025/1/3</div>
<div style="position:absolute;left:110px;top:505.0px;font-size:15px;line-height:21px;color:#222;white-space:nowrap;">コーヒー</div>
<div style="position:absolute;right:1253.5px;top:505.0px;font-size:16px;line-height:22px;color:#222;white-space:nowrap;transform:scaleX(0.92);transform-origin:right center">6</div>
<div style="position:absolute;right:1213.5px;top:505.0px;font-size:16px;line-height:22px;color:#222;white-space:nowrap;transform:scaleX(0.92);transform-origin:right center">350</div>
<div style="position:absolute;left:292px;top:505.0px;font-size:15px;line-height:21px;color:#222;white-space:nowrap;">B</div>
<div id="ka8009796e7" style="position:absolute;right:1395.5px;top:530.0px;font-size:16px;line-height:22px;color:#222;white-space:nowrap;transform:scaleX(1.0115);transform-origin:right center;">2025/1/1</div>
<div style="position:absolute;left:110px;top:530.0px;font-size:15px;line-height:21px;color:#222;white-space:nowrap;">コーヒー</div>
<div style="position:absolute;right:1253.5px;top:530.0px;font-size:16px;line-height:22px;color:#222;white-space:nowrap;transform:scaleX(0.92);transform-origin:right center">14</div>
<div style="position:absolute;right:1213.5px;top:530.0px;font-size:16px;line-height:22px;color:#222;white-space:nowrap;transform:scaleX(0.92);transform-origin:right center">350</div>
<div style="position:absolute;left:292px;top:530.0px;font-size:15px;line-height:21px;color:#222;white-space:nowrap;">C</div>
<div id="k706a51f7bc" style="position:absolute;right:1395.5px;top:555.0px;font-size:16px;line-height:22px;color:#222;white-space:nowrap;transform:scaleX(1.0115);transform-origin:right center;">2025/1/1</div>
<div style="position:absolute;left:110px;top:555.0px;font-size:15px;line-height:21px;color:#222;white-space:nowrap;">サンドイッチ</div>
<div style="position:absolute;right:1253.5px;top:555.0px;font-size:16px;line-height:22px;color:#222;white-space:nowrap;transform:scaleX(0.92);transform-origin:right center">6</div>
<div style="position:absolute;right:1213.5px;top:555.0px;font-size:16px;line-height:22px;color:#222;white-space:nowrap;transform:scaleX(0.92);transform-origin:right center">480</div>
<div style="position:absolute;left:292px;top:555.0px;font-size:15px;line-height:21px;color:#222;white-space:nowrap;">C</div>
<div id="kf4b4635511" style="position:absolute;right:1395.5px;top:580.0px;font-size:16px;line-height:22px;color:#222;white-space:nowrap;transform:scaleX(1.0115);transform-origin:right center;">2025/1/3</div>
<div style="position:absolute;left:110px;top:580.0px;font-size:15px;line-height:21px;color:#222;white-space:nowrap;">コーヒー</div>
<div style="position:absolute;right:1253.5px;top:580.0px;font-size:16px;line-height:22px;color:#222;white-space:nowrap;transform:scaleX(0.92);transform-origin:right center">8</div>
<div style="position:absolute;right:1213.5px;top:580.0px;font-size:16px;line-height:22px;color:#222;white-space:nowrap;transform:scaleX(0.92);transform-origin:right center">350</div>
<div style="position:absolute;left:292px;top:580.0px;font-size:15px;line-height:21px;color:#222;white-space:nowrap;">C</div>
<div id="k919a185be2" style="position:absolute;right:1395.5px;top:605.0px;font-size:16px;line-height:22px;color:#222;white-space:nowrap;transform:scaleX(1.0115);transform-origin:right center;">2025/1/3</div>
<div style="position:absolute;left:110px;top:605.0px;font-size:15px;line-height:21px;color:#222;white-space:nowrap;">紅茶</div>
<div style="position:absolute;right:1253.5px;top:605.0px;font-size:16px;line-height:22px;color:#222;white-space:nowrap;transform:scaleX(0.92);transform-origin:right center">5</div>
<div style="position:absolute;right:1213.5px;top:605.0px;font-size:16px;line-height:22px;color:#222;white-space:nowrap;transform:scaleX(0.92);transform-origin:right center">300</div>
<div style="position:absolute;left:292px;top:605.0px;font-size:15px;line-height:21px;color:#222;white-space:nowrap;">C</div>
<div id="k1153f4ac45" style="position:absolute;right:1395.5px;top:630.0px;font-size:16px;line-height:22px;color:#222;white-space:nowrap;transform:scaleX(1.0115);transform-origin:right center;">2025/1/4</div>
<div style="position:absolute;left:110px;top:630.0px;font-size:15px;line-height:21px;color:#222;white-space:nowrap;">サンドイッチ</div>
<div style="position:absolute;right:1253.5px;top:630.0px;font-size:16px;line-height:22px;color:#222;white-space:nowrap;transform:scaleX(0.92);transform-origin:right center">3</div>
<div style="position:absolute;right:1213.5px;top:630.0px;font-size:16px;line-height:22px;color:#222;white-space:nowrap;transform:scaleX(0.92);transform-origin:right center">480</div>
<div style="position:absolute;left:292px;top:630.0px;font-size:15px;line-height:21px;color:#222;white-space:nowrap;">C</div>
<div style="position:absolute;left:549px;top:255.0px;font-size:15px;line-height:21px;color:#222;white-space:nowrap;">商品名</div>
<div style="position:absolute;left:631px;top:255.0px;font-size:15px;line-height:21px;color:#222;white-space:nowrap;">店舗A</div>
<div style="position:absolute;left:732px;top:255.0px;font-size:15px;line-height:21px;color:#222;white-space:nowrap;">店舗B</div>
<div style="position:absolute;left:803px;top:255.0px;font-size:15px;line-height:21px;color:#222;white-space:nowrap;">店舗C</div>
<div style="position:absolute;right:778.0px;top:280.0px;font-size:16px;line-height:22px;color:#222;white-space:nowrap;transform:scaleX(0.92);transform-origin:right center">7350</div>
<div style="position:absolute;right:707.5px;top:280.0px;font-size:16px;line-height:22px;color:#222;white-space:nowrap;transform:scaleX(0.92);transform-origin:right center">11200</div>
<div style="position:absolute;right:605.0px;top:280.0px;font-size:16px;line-height:22px;color:#222;white-space:nowrap;transform:scaleX(0.92);transform-origin:right center">7700</div>
<div style="position:absolute;left:549px;top:280.0px;font-size:15px;line-height:21px;color:#222;white-space:nowrap;">コーヒー</div>
<div style="position:absolute;right:778.0px;top:305.0px;font-size:16px;line-height:22px;color:#222;white-space:nowrap;transform:scaleX(0.92);transform-origin:right center">6240</div>
<div style="position:absolute;right:707.5px;top:305.0px;font-size:16px;line-height:22px;color:#222;white-space:nowrap;transform:scaleX(0.92);transform-origin:right center">1920</div>
<div style="position:absolute;right:605.0px;top:305.0px;font-size:16px;line-height:22px;color:#222;white-space:nowrap;transform:scaleX(0.92);transform-origin:right center">4320</div>
<div style="position:absolute;left:549px;top:304px;width:78px;height:25px;overflow:hidden">
<div style="position:absolute;left:0px;top:1.0px;font-size:15px;line-height:21px;color:#222;white-space:nowrap;">サンドイッチ</div>
</div>
<div style="position:absolute;right:778.0px;top:330.0px;font-size:16px;line-height:22px;color:#222;white-space:nowrap;transform:scaleX(0.92);transform-origin:right center">2100</div>
<div style="position:absolute;right:707.5px;top:330.0px;font-size:16px;line-height:22px;color:#222;white-space:nowrap;transform:scaleX(0.92);transform-origin:right center">3000</div>
<div style="position:absolute;right:605.0px;top:330.0px;font-size:16px;line-height:22px;color:#222;white-space:nowrap;transform:scaleX(0.92);transform-origin:right center">1500</div>
<div style="position:absolute;left:549px;top:330.0px;font-size:15px;line-height:21px;color:#222;white-space:nowrap;">紅茶</div>
<div style="position:absolute;left:546px;top:504px;width:357px;height:126px;border:1px solid #86a9d9;box-sizing:border-box;box-shadow:0 2px 6px rgba(0,0,0,0.12)"></div>
<div style="position:absolute;left:549px;top:505.0px;font-size:15px;line-height:21px;color:#222;white-space:nowrap;">商品名</div>
<div style="position:absolute;left:631px;top:505.0px;font-size:15px;line-height:21px;color:#222;white-space:nowrap;">店舗A</div>
<div style="position:absolute;left:732px;top:505.0px;font-size:15px;line-height:21px;color:#222;white-space:nowrap;">店舗B</div>
<div style="position:absolute;left:803px;top:505.0px;font-size:15px;line-height:21px;color:#222;white-space:nowrap;">店舗C</div>
<div style="position:absolute;right:773.5px;top:530.0px;font-size:16px;line-height:22px;color:#222;white-space:nowrap;transform:scaleX(0.92);transform-origin:right center">21</div>
<div style="position:absolute;right:702.5px;top:530.0px;font-size:16px;line-height:22px;color:#222;white-space:nowrap;transform:scaleX(0.92);transform-origin:right center">32</div>
<div style="position:absolute;right:600.5px;top:530.0px;font-size:16px;line-height:22px;color:#222;white-space:nowrap;transform:scaleX(0.92);transform-origin:right center">22</div>
<div style="position:absolute;left:549px;top:530.0px;font-size:15px;line-height:21px;color:#222;white-space:nowrap;">コーヒー</div>
<div style="position:absolute;right:773.5px;top:555.0px;font-size:16px;line-height:22px;color:#222;white-space:nowrap;transform:scaleX(0.92);transform-origin:right center">13</div>
<div style="position:absolute;right:702.5px;top:555.0px;font-size:16px;line-height:22px;color:#222;white-space:nowrap;transform:scaleX(0.92);transform-origin:right center">4</div>
<div style="position:absolute;right:600.5px;top:555.0px;font-size:16px;line-height:22px;color:#222;white-space:nowrap;transform:scaleX(0.92);transform-origin:right center">9</div>
<div style="position:absolute;left:549px;top:554px;width:78px;height:25px;overflow:hidden">
<div style="position:absolute;left:0px;top:1.0px;font-size:15px;line-height:21px;color:#222;white-space:nowrap;">サンドイッチ</div>
</div>
<div style="position:absolute;right:773.5px;top:580.0px;font-size:16px;line-height:22px;color:#222;white-space:nowrap;transform:scaleX(0.92);transform-origin:right center">7</div>
<div style="position:absolute;right:702.5px;top:580.0px;font-size:16px;line-height:22px;color:#222;white-space:nowrap;transform:scaleX(0.92);transform-origin:right center">10</div>
<div style="position:absolute;right:600.5px;top:580.0px;font-size:16px;line-height:22px;color:#222;white-space:nowrap;transform:scaleX(0.92);transform-origin:right center">5</div>
<div style="position:absolute;left:549px;top:580.0px;font-size:15px;line-height:21px;color:#222;white-space:nowrap;">紅茶</div>
<div style="position:absolute;right:773.5px;top:605.0px;font-size:16px;line-height:22px;color:#222;white-space:nowrap;transform:scaleX(0.92);transform-origin:right center">41</div>
<div style="position:absolute;right:702.5px;top:605.0px;font-size:16px;line-height:22px;color:#222;white-space:nowrap;transform:scaleX(0.92);transform-origin:right center">46</div>
<div style="position:absolute;right:600.5px;top:605.0px;font-size:16px;line-height:22px;color:#222;white-space:nowrap;transform:scaleX(0.92);transform-origin:right center">36</div>
<div style="position:absolute;left:549px;top:605.0px;font-size:15px;line-height:21px;color:#222;white-space:nowrap;">合計</div>
<div style="position:absolute;left:546px;top:528px;width:82px;height:27px;border:2px solid #107c41;box-sizing:border-box"></div>
<div style="position:absolute;left:624px;top:551px;width:6px;height:6px;background:#107c41;border:1px solid #fff"></div>
<div style="position:absolute;left:532px;top:483px;width:398px;height:162px;border:3px solid #e8000e;box-sizing:border-box"></div>
<div style="position:absolute;left:1480px;top:230px;width:20px;height:664px;background:#e6ebee"></div>
<div style="position:absolute;left:1481px;top:230px;width:18px;height:665px;background:#f4f4f4;border-radius:9px"></div>
<svg style="position:absolute;left:1485px;top:235px;overflow:visible;" width="11" height="8" viewBox="0 0 11 8"><path d="M5.5 0.5L10.5 7.5H0.5Z" fill="#6e6e6e" stroke="#6e6e6e" stroke-linejoin="round"/></svg>
<div style="position:absolute;left:1486px;top:247px;width:8.5px;height:620px;background:#6e6e6e;border-radius:5px"></div>
<svg style="position:absolute;left:1485px;top:884px;overflow:visible;" width="11" height="7" viewBox="0 0 11 7"><path d="M0.5 0.5H10.5L5.5 6.5Z" fill="#6e6e6e" stroke="#6e6e6e" stroke-linejoin="round"/></svg>
<div style="position:absolute;left:0px;top:894px;width:1480px;height:12px;background:#fff"></div>
<div style="position:absolute;left:0px;top:894px;width:310px;height:34px;background:#e8e6e1;border-top-right-radius:7px"></div>
<div style="position:absolute;left:380px;top:894px;width:1100px;height:34px;background:#e8e6e1;border-top-left-radius:7px"></div>
<div style="position:absolute;left:1480px;top:894px;width:20px;height:34px;background:#e8e6e1"></div>
<svg style="position:absolute;left:21px;top:904px;overflow:visible;" width="8" height="14" viewBox="0 0 8 14"><path d="M6.5 1L1.5 7L6.5 13" fill="none" stroke="#a0a0a0" stroke-width="1.2"/></svg>
<svg style="position:absolute;left:55px;top:904px;overflow:visible;" width="8" height="14" viewBox="0 0 8 14"><path d="M1.5 1L6.5 7L1.5 13" fill="none" stroke="#a0a0a0" stroke-width="1.2"/></svg>
<div id="k1723c773a8" style="position:absolute;left:121px;top:901.0px;font-size:15px;line-height:21px;color:#242424;white-space:nowrap;transform:scaleX(0.9746);transform-origin:left center;">店舗A</div>
<div style="position:absolute;left:174px;top:903px;width:1px;height:17px;background:#c8c6c2"></div>
<div id="k8b20796404" style="position:absolute;left:187px;top:901.0px;font-size:15px;line-height:21px;color:#242424;white-space:nowrap;transform:scaleX(0.9996);transform-origin:left center;">店舗B</div>
<div style="position:absolute;left:240px;top:903px;width:1px;height:17px;background:#c8c6c2"></div>
<div id="k3069618ce6" style="position:absolute;left:252px;top:901.0px;font-size:15px;line-height:21px;color:#242424;white-space:nowrap;transform:scaleX(0.9793);transform-origin:left center;">店舗C</div>
<div style="position:absolute;left:305px;top:903px;width:1px;height:17px;background:#c8c6c2"></div>
<div style="position:absolute;left:306px;top:918px;width:78px;height:10px;background:#e8e6e1"></div>
<div style="position:absolute;left:310px;top:894px;width:70px;height:30px;background:#fff;border-radius:0 0 6px 6px"></div>
<div id="k4c31d20536" style="position:absolute;left:320px;top:898.0px;font-size:15px;line-height:21px;color:#242424;white-space:nowrap;transform:scaleX(1.0516);transform-origin:left center;">Sheet4</div>
<div style="position:absolute;left:318px;top:918.5px;width:54px;height:2.5px;background:#107c41;border-radius:1px"></div>
<div style="position:absolute;left:384.5px;top:903px;width:1px;height:17px;background:#c8c6c2"></div>
<svg style="position:absolute;left:428px;top:904px;overflow:visible;" width="13" height="13" viewBox="0 0 13 13"><path d="M6.5 0.5V12.5M0.5 6.5H12.5" stroke="#424242" stroke-width="1.3"/></svg>
<div style="position:absolute;left:904px;top:904.5px;width:2.5px;height:2.5px;background:#242424;border-radius:50%"></div>
<div style="position:absolute;left:904px;top:910px;width:2.5px;height:2.5px;background:#242424;border-radius:50%"></div>
<div style="position:absolute;left:904px;top:915.5px;width:2.5px;height:2.5px;background:#242424;border-radius:50%"></div>
<div style="position:absolute;left:925px;top:902px;width:556px;height:18px;background:#f4f4f4;border-radius:9px"></div>
<svg style="position:absolute;left:927px;top:906px;overflow:visible;" width="8" height="10" viewBox="0 0 8 10"><path d="M7 0.5V9.5L0.5 5Z" fill="#6e6e6e" stroke="#6e6e6e" stroke-linejoin="round"/></svg>
<div style="position:absolute;left:940px;top:907px;width:509px;height:8.5px;background:#6e6e6e;border-radius:5px"></div>
<svg style="position:absolute;left:1469px;top:906px;overflow:visible;" width="8" height="10" viewBox="0 0 8 10"><path d="M1 0.5V9.5L7.5 5Z" fill="#6e6e6e" stroke="#6e6e6e" stroke-linejoin="round"/></svg>
<div style="position:absolute;left:0px;top:928px;width:1500px;height:22px;background:#f3f3f3"></div>
<div style="position:absolute;left:0px;top:928px;width:1500px;height:1px;background:#d9d9d9"></div>
<div id="kf3b7da09c7" style="position:absolute;left:12px;top:930.5px;font-size:13px;line-height:18px;color:#5a5a5a;white-space:nowrap;transform:scaleX(0.9423);transform-origin:left center;">準備完了</div>
<svg style="position:absolute;left:82px;top:931px;overflow:visible;" width="17" height="17" viewBox="0 0 17 17"><g fill="none" stroke="#424242" stroke-width="1.1"><path d="M7 14.5H1.5V1.5H15.5V7"/><path d="M1.5 4.5H15.5M4 7H8M4 9.5H7M4 12H7"/></g><circle cx="12" cy="12" r="3.8" fill="#fff" stroke="#424242" stroke-width="1.2"/><circle cx="12" cy="12" r="1.8" fill="#424242"/></svg>
<svg style="position:absolute;left:115px;top:931px;overflow:visible;" width="17" height="17" viewBox="0 0 17 17"><g fill="none" stroke="#424242" stroke-width="1.1"><circle cx="7" cy="2.5" r="1.6"/><path d="M1 5.5L7 6.5L13 5.5M7 6.5V10L4 15.5M7 10L9 12"/><path d="M10 11L15.5 16.5M15.5 11L10 16.5"/></g></svg>
<div id="kd99977f95b" style="position:absolute;left:133px;top:930.5px;font-size:13px;line-height:18px;color:#242424;white-space:nowrap;transform:scaleX(0.8426);transform-origin:left center;font-weight:bold">アクセシビリティ: 検討が必要です</div>
<svg style="position:absolute;left:1091px;top:931px;overflow:visible;" width="17" height="16" viewBox="0 0 17 16"><g fill="none" stroke="#424242" stroke-width="1.1"><path d="M7 11.5H1.5V1.5H14.5V6"/></g><circle cx="11.5" cy="11.5" r="2.5" fill="none" stroke="#424242" stroke-width="1.3" stroke-dasharray="1.6 0.9"/><circle cx="11.5" cy="11.5" r="0.9" fill="#424242"/></svg>
<div id="k8d8c30bbad" style="position:absolute;left:1110px;top:930.5px;font-size:13px;line-height:18px;color:#3a3a3a;white-space:nowrap;transform:scaleX(0.9423);transform-origin:left center;">表示設定</div>
<div style="position:absolute;left:1179px;top:929px;width:42px;height:21px;background:#dcdcdc"></div>
<svg style="position:absolute;left:1193px;top:932px;overflow:visible;" width="14" height="14" viewBox="0 0 14 14"><g fill="none" stroke="#242424" stroke-width="1.2"><rect x="0.6" y="0.6" width="12.8" height="12.8"/><path d="M0.6 4.9H13.4M0.6 9.1H13.4M4.9 0.6V13.4M9.1 0.6V13.4"/></g></svg>
<svg style="position:absolute;left:1234px;top:932px;overflow:visible;" width="15" height="14" viewBox="0 0 15 14"><g fill="none" stroke="#424242" stroke-width="1.2"><rect x="0.6" y="0.6" width="13.8" height="12.8"/><rect x="3.6" y="3.1" width="7.8" height="7.8"/><path d="M5.5 5.5H9.5M5.5 7H9.5M5.5 8.5H9.5" stroke-width="0.9"/></g></svg>
<svg style="position:absolute;left:1276px;top:932px;overflow:visible;" width="15" height="14" viewBox="0 0 15 14"><g fill="none" stroke="#424242" stroke-width="1.2"><rect x="0.6" y="0.6" width="13.8" height="12.8"/><path d="M5 0.6V6.5H10V0.6"/></g></svg>
<div style="position:absolute;left:1310px;top:939px;width:8px;height:1.2px;background:#888"></div>
<div style="position:absolute;left:1325px;top:939px;width:103px;height:1px;background:#8a8a8a"></div>
<div style="position:absolute;left:1374px;top:934px;width:5.5px;height:11px;background:#5a5a5a;border-radius:1px"></div>
<svg style="position:absolute;left:1433px;top:934px;overflow:visible;" width="11" height="11" viewBox="0 0 11 11"><path d="M5.5 0.5V10.5M0.5 5.5H10.5" stroke="#888" stroke-width="1.1"/></svg>
<div id="k455fe35681" style="position:absolute;left:1456px;top:930.0px;font-size:14px;line-height:19px;color:#242424;white-space:nowrap;transform:scaleX(0.9773);transform-origin:left center;">100%</div>
</body></html>
